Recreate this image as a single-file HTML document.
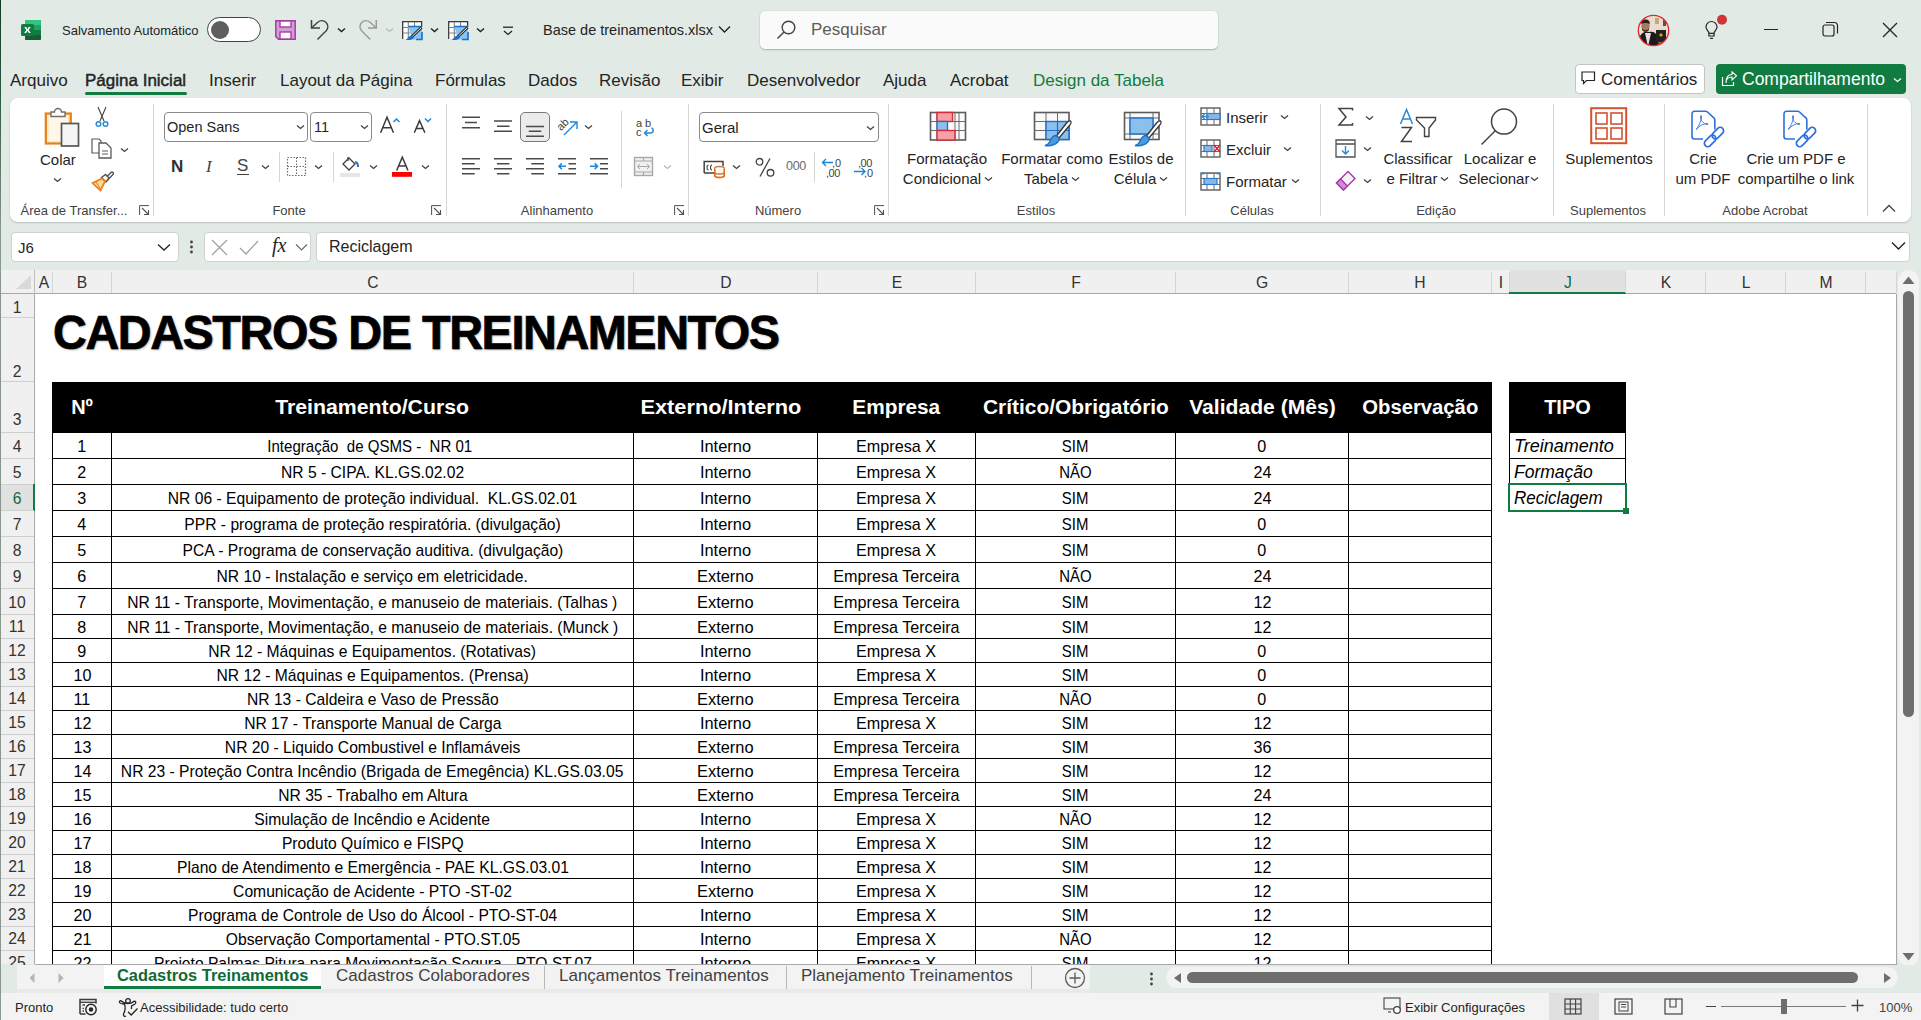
<!DOCTYPE html><html><head><meta charset="utf-8"><style>
*{margin:0;padding:0;box-sizing:border-box}
html,body{width:1921px;height:1020px;overflow:hidden;background:#e1eae5;font-family:"Liberation Sans",sans-serif;color:#242424}
.t{position:absolute;white-space:pre}
.r{position:absolute}
</style></head><body>
<div class="r" style="left:0px;top:0px;width:1px;height:1020px;background:linear-gradient(#0f3d22 0px,#2f5a40 100px,#8a9690 230px,#8a9a90 1020px);"></div>
<svg class="r" style="left:21px;top:20px;" width="21" height="20" viewBox="0 0 21 20"><rect x="4" y="0" width="16" height="20" rx="1.5" fill="#21a366"/>
<rect x="4" y="0" width="16" height="5" fill="#33c481"/><rect x="4" y="10" width="16" height="5" fill="#107c41"/><rect x="4" y="15" width="16" height="5" rx="1" fill="#185c37"/>
<rect x="0" y="4" width="13" height="12" rx="1.5" fill="#107c41"/>
<path d="M3.3 7 L5.3 7 L6.5 9.2 L7.7 7 L9.7 7 L7.6 10 L9.8 13 L7.8 13 L6.5 10.8 L5.2 13 L3.2 13 L5.4 10 Z" fill="#fff"/></svg>
<div class="t" style="left:62px;top:24px;font-size:13px;line-height:13px;color:#242424;font-weight:400;font-style:normal;">Salvamento Automático</div>
<div class="r" style="left:207px;top:17px;width:54px;height:25px;border:1.3px solid #424242;border-radius:13px;background:#fff"></div>
<div class="r" style="left:211px;top:21px;width:18px;height:18px;border-radius:9px;background:#5f5f5f"></div>
<svg class="r" style="left:275px;top:20px;" width="21" height="20" viewBox="0 0 21 20"><path d="M0.8 0.8 H20.2 V19.2 H3.5 L0.8 16.5 Z" fill="#d59dd8" stroke="#a53ba5" stroke-width="1.5"/><rect x="5" y="1" width="11" height="6" fill="#fff" stroke="#a53ba5" stroke-width="1.4"/><rect x="5" y="12" width="11" height="7" fill="#fff" stroke="#a53ba5" stroke-width="1.4"/></svg>
<svg class="r" style="left:310px;top:19px;" width="22" height="22" viewBox="0 0 22 22"><path d="M1.5 1 V9 H10" fill="none" stroke="#424242" stroke-width="1.5"/><path d="M2 8.6 L7.76 3.26 A6 6 0 0 1 16.24 11.74 L7.5 20.5" fill="none" stroke="#424242" stroke-width="1.4"/></svg>
<svg class="r" style="left:337px;top:27px;" width="9" height="6" viewBox="0 0 9 6"><path d="M1 1.5 L4.5 4.5 L8 1.5" fill="none" stroke="#242424" stroke-width="1.5"/></svg>
<svg class="r" style="left:357px;top:19px;" width="22" height="22" viewBox="0 0 22 22"><path d="M19.3 1 V9 H11" fill="none" stroke="#9a9a9a" stroke-width="1.5"/><path d="M18.8 8.6 L13.04 3.26 A6 6 0 0 0 4.56 11.74 L13.3 20.5" fill="none" stroke="#9a9a9a" stroke-width="1.4"/></svg>
<svg class="r" style="left:385px;top:27px;" width="9" height="6" viewBox="0 0 9 6"><path d="M1 1.5 L4.5 4.5 L8 1.5" fill="none" stroke="#c0b8bc" stroke-width="1.2"/></svg>
<svg class="r" style="left:402px;top:21px;" width="22" height="20" viewBox="0 0 22 20"><path d="M0.8 18 V0.8 H19.5 V6" fill="none" stroke="#3a3a3a" stroke-width="1.5"/>
<rect x="1.5" y="1.5" width="17.5" height="16.5" fill="#fff"/>
<path d="M1 6.5 H19 M1 12 H8 M6.3 1 V18 M12.5 1 V6" stroke="#808080" stroke-width="1.1"/>
<path d="M6.3 5.5 H20 V18.5 H10 Z" fill="#8cc4f0"/>
<path d="M6.3 5.5 H20 M20 11 V18.5 H14" fill="none" stroke="#1a6fc9" stroke-width="1.6"/>
<path d="M19.5 6.5 L10 15.5" stroke="#2e2e2e" stroke-width="3"/><path d="M19 7 L10.5 15" stroke="#fff" stroke-width="0.9"/>
<path d="M10.5 14.5 C8 14, 6.5 16, 5.5 17.5 C4.5 18.5, 4 18.5, 3.5 18.8 C7 19.5, 11 19, 12 16 Z" fill="#1a6fc9"/></svg>
<svg class="r" style="left:430px;top:27px;" width="9" height="6" viewBox="0 0 9 6"><path d="M1 1.5 L4.5 4.5 L8 1.5" fill="none" stroke="#242424" stroke-width="1.5"/></svg>
<svg class="r" style="left:448px;top:21px;" width="22" height="20" viewBox="0 0 22 20"><path d="M0.8 18 V0.8 H19.5 V6" fill="none" stroke="#3a3a3a" stroke-width="1.5"/>
<rect x="1.5" y="1.5" width="17.5" height="16.5" fill="#fff"/>
<path d="M1 6.5 H19 M1 12 H8 M6.3 1 V18 M12.5 1 V6" stroke="#808080" stroke-width="1.1"/>
<path d="M6.3 5.5 H20 V18.5 H10 Z" fill="#8cc4f0"/>
<path d="M6.3 5.5 H20 M20 11 V18.5 H14" fill="none" stroke="#1a6fc9" stroke-width="1.6"/>
<path d="M19.5 6.5 L10 15.5" stroke="#2e2e2e" stroke-width="3"/><path d="M19 7 L10.5 15" stroke="#fff" stroke-width="0.9"/>
<path d="M10.5 14.5 C8 14, 6.5 16, 5.5 17.5 C4.5 18.5, 4 18.5, 3.5 18.8 C7 19.5, 11 19, 12 16 Z" fill="#1a6fc9"/></svg>
<svg class="r" style="left:476px;top:27px;" width="9" height="6" viewBox="0 0 9 6"><path d="M1 1.5 L4.5 4.5 L8 1.5" fill="none" stroke="#242424" stroke-width="1.5"/></svg>
<svg class="r" style="left:502px;top:26px;" width="12" height="10" viewBox="0 0 12 10"><path d="M1 1.2 H11" stroke="#242424" stroke-width="1.3"/><path d="M2 5 L6 8.5 L10 5" fill="none" stroke="#242424" stroke-width="1.3"/></svg>
<div class="t" style="left:543px;top:23px;font-size:14.5px;line-height:14.5px;color:#242424;font-weight:400;font-style:normal;">Base de treinamentos.xlsx</div>
<svg class="r" style="left:718px;top:25px;" width="13" height="9" viewBox="0 0 13 9"><path d="M1 1.5 L6.5 7 L12 1.5" fill="none" stroke="#242424" stroke-width="1.4"/></svg>
<div class="r" style="left:760px;top:11px;width:458px;height:38px;background:#fafafa;border-radius:5px;box-shadow:0 1px 1.5px rgba(0,0,0,.22),0 0 0 0.5px rgba(0,0,0,.06)"></div>
<svg class="r" style="left:775px;top:19px;" width="22" height="22" viewBox="0 0 22 22"><circle cx="13.5" cy="8.5" r="6.3" fill="none" stroke="#424242" stroke-width="1.4"/><path d="M9 13 L2.5 19.5" stroke="#424242" stroke-width="1.5"/></svg>
<div class="t" style="left:811px;top:21px;font-size:17px;line-height:17px;color:#5c5c5c;font-weight:400;font-style:normal;">Pesquisar</div>
<svg class="r" style="left:1637px;top:14px;" width="33" height="33" viewBox="0 0 33 33"><defs><clipPath id="av"><circle cx="16.5" cy="16.5" r="15"/></clipPath></defs>
<g clip-path="url(#av)">
<rect x="0" y="0" width="33" height="33" fill="#e8ddd0"/>
<rect x="18" y="4" width="4" height="6" fill="#c9a870"/><rect x="26" y="6" width="3" height="6" fill="#5a5040"/>
<rect x="0" y="26" width="33" height="8" fill="#8a6a4a"/>
<path d="M2 33 L3 22 C5 18, 9 17, 12 18 C15 17, 18 18, 20 21 L22 33 Z" fill="#1e1a1a"/>
<path d="M8 19 L11 33 L14 19 Z" fill="#e8dce8"/>
<ellipse cx="8.5" cy="12" rx="4.2" ry="5" fill="#a8785a"/>
<path d="M4.3 10 C4 6, 7 5, 9 5.5 C12 5.5, 13 8, 12.7 10 C11 8.5, 6 8.5, 4.3 10 Z" fill="#2a201c"/>
<path d="M5 14 C6 17, 11 17, 12 14 L12 16 C10 18.5, 7 18.5, 5 16 Z" fill="#3a2a22"/>
<rect x="19" y="16" width="10" height="12" fill="#222"/><path d="M22 21 L24 19 L26 21 L24 23 Z" fill="#d4a020"/>
</g>
<circle cx="16.5" cy="16.5" r="15.2" fill="none" stroke="#e0262e" stroke-width="1.3"/></svg>
<svg class="r" style="left:1702px;top:13px;" width="28" height="28" viewBox="0 0 28 28"><path d="M7 20 C6.5 18, 4 16.5, 4 14 A5.5 5.5 0 0 1 15 14 C15 16.5, 12.5 18, 12 20" fill="none" stroke="#242424" stroke-width="1.2"/><path d="M6.9 20.3 H12.1 V23 H6.9 Z" fill="none" stroke="#242424" stroke-width="1.2"/><path d="M8 25.3 H11" stroke="#242424" stroke-width="1.2"/><circle cx="20" cy="6.7" r="5" fill="#d13438"/></svg>
<div class="r" style="left:1764px;top:29px;width:14px;height:1.3px;background:#242424;"></div>
<svg class="r" style="left:1822px;top:21px;" width="17" height="17" viewBox="0 0 17 17"><rect x="1" y="4" width="11" height="11" rx="2" fill="none" stroke="#242424" stroke-width="1.2"/><path d="M4 1.5 H12.5 A3 3 0 0 1 15.5 4.5 V12.5" fill="none" stroke="#242424" stroke-width="1.2"/></svg>
<svg class="r" style="left:1882px;top:22px;" width="16" height="16" viewBox="0 0 16 16"><path d="M1 1 L15 15 M15 1 L1 15" stroke="#242424" stroke-width="1.3"/></svg>
<div class="t" style="left:10px;top:72px;font-size:17px;line-height:17px;color:#242424;font-weight:400;font-style:normal;">Arquivo</div>
<div class="t" style="left:85px;top:72px;font-size:17px;line-height:17px;color:#242424;font-weight:400;font-style:normal;-webkit-text-stroke:0.45px #242424">Página Inicial</div>
<div class="t" style="left:209px;top:72px;font-size:17px;line-height:17px;color:#242424;font-weight:400;font-style:normal;">Inserir</div>
<div class="t" style="left:280px;top:72px;font-size:17px;line-height:17px;color:#242424;font-weight:400;font-style:normal;">Layout da Página</div>
<div class="t" style="left:435px;top:72px;font-size:17px;line-height:17px;color:#242424;font-weight:400;font-style:normal;">Fórmulas</div>
<div class="t" style="left:528px;top:72px;font-size:17px;line-height:17px;color:#242424;font-weight:400;font-style:normal;">Dados</div>
<div class="t" style="left:599px;top:72px;font-size:17px;line-height:17px;color:#242424;font-weight:400;font-style:normal;">Revisão</div>
<div class="t" style="left:681px;top:72px;font-size:17px;line-height:17px;color:#242424;font-weight:400;font-style:normal;">Exibir</div>
<div class="t" style="left:747px;top:72px;font-size:17px;line-height:17px;color:#242424;font-weight:400;font-style:normal;">Desenvolvedor</div>
<div class="t" style="left:883px;top:72px;font-size:17px;line-height:17px;color:#242424;font-weight:400;font-style:normal;">Ajuda</div>
<div class="t" style="left:950px;top:72px;font-size:17px;line-height:17px;color:#242424;font-weight:400;font-style:normal;">Acrobat</div>
<div class="t" style="left:1033px;top:72px;font-size:17px;line-height:17px;color:#107c41;font-weight:400;font-style:normal;">Design da Tabela</div>
<div class="r" style="left:85px;top:92px;width:102px;height:3px;border-radius:2px;background:#107c41"></div>
<div class="r" style="left:1575px;top:64px;width:130px;height:30px;background:#fff;border:1px solid #c4c4c4;border-radius:4px"></div>
<svg class="r" style="left:1581px;top:71px;" width="16" height="15" viewBox="0 0 16 15"><path d="M1 1 H13.5 V9.5 H5.5 L2.5 12.5 V9.5 H1 Z" fill="none" stroke="#242424" stroke-width="1.2"/></svg>
<div class="t" style="left:1601px;top:71px;font-size:17px;line-height:17px;color:#242424;font-weight:400;font-style:normal;">Comentários</div>
<div class="r" style="left:1716px;top:64px;width:190px;height:30px;background:#107c41;border-radius:4px"></div>
<svg class="r" style="left:1721px;top:71px;" width="17" height="16" viewBox="0 0 17 16"><path d="M1.5 6 V14.5 H12.5 V11" fill="none" stroke="#fff" stroke-width="1.2"/><path d="M5 12 C5 8, 7.5 6, 11 6 V9 L15.5 4.8 L11 0.8 V3.5 C7 3.5, 5 7, 5 12 Z" fill="none" stroke="#fff" stroke-width="1.1"/></svg>
<div class="t" style="left:1742px;top:71px;font-size:17.5px;line-height:17.5px;color:#ffffff;font-weight:400;font-style:normal;">Compartilhamento</div>
<svg class="r" style="left:1893px;top:77px;" width="9" height="6" viewBox="0 0 9 6"><path d="M1 1.5 L4.5 4.5 L8 1.5" fill="none" stroke="#fff" stroke-width="1.3"/></svg>
<div class="r" style="left:10px;top:98px;width:1901px;height:124px;background:#fff;border-radius:8px;box-shadow:0 1px 2px rgba(0,0,0,.18)"></div>
<div class="r" style="left:153px;top:104px;width:1px;height:112px;background:#d6d6d6;"></div>
<div class="r" style="left:446px;top:104px;width:1px;height:112px;background:#d6d6d6;"></div>
<div class="r" style="left:688px;top:104px;width:1px;height:112px;background:#d6d6d6;"></div>
<div class="r" style="left:888px;top:104px;width:1px;height:112px;background:#d6d6d6;"></div>
<div class="r" style="left:1185px;top:104px;width:1px;height:112px;background:#d6d6d6;"></div>
<div class="r" style="left:1320px;top:104px;width:1px;height:112px;background:#d6d6d6;"></div>
<div class="r" style="left:1553px;top:104px;width:1px;height:112px;background:#d6d6d6;"></div>
<div class="r" style="left:1664px;top:104px;width:1px;height:112px;background:#d6d6d6;"></div>
<div class="r" style="left:1867px;top:104px;width:1px;height:112px;background:#d6d6d6;"></div>
<div class="t" style="left:-326px;width:800px;text-align:center;top:203.5px;font-size:13px;line-height:13px;color:#424242;font-weight:400;font-style:normal;">Área de Transfer...</div>
<div class="t" style="left:-111px;width:800px;text-align:center;top:203.5px;font-size:13px;line-height:13px;color:#424242;font-weight:400;font-style:normal;">Fonte</div>
<div class="t" style="left:157px;width:800px;text-align:center;top:203.5px;font-size:13px;line-height:13px;color:#424242;font-weight:400;font-style:normal;">Alinhamento</div>
<div class="t" style="left:378px;width:800px;text-align:center;top:203.5px;font-size:13px;line-height:13px;color:#424242;font-weight:400;font-style:normal;">Número</div>
<div class="t" style="left:636px;width:800px;text-align:center;top:203.5px;font-size:13px;line-height:13px;color:#424242;font-weight:400;font-style:normal;">Estilos</div>
<div class="t" style="left:852px;width:800px;text-align:center;top:203.5px;font-size:13px;line-height:13px;color:#424242;font-weight:400;font-style:normal;">Células</div>
<div class="t" style="left:1036px;width:800px;text-align:center;top:203.5px;font-size:13px;line-height:13px;color:#424242;font-weight:400;font-style:normal;">Edição</div>
<div class="t" style="left:1208px;width:800px;text-align:center;top:203.5px;font-size:13px;line-height:13px;color:#424242;font-weight:400;font-style:normal;">Suplementos</div>
<div class="t" style="left:1365px;width:800px;text-align:center;top:203.5px;font-size:13px;line-height:13px;color:#424242;font-weight:400;font-style:normal;">Adobe Acrobat</div>
<svg class="r" style="left:139px;top:205px;" width="11" height="11" viewBox="0 0 11 11"><path d="M0.6 10 V0.6 H10 " fill="none" stroke="#505050" stroke-width="1"/><path d="M3 3 L9.5 9.5 M5 9.5 H9.5 V5" fill="none" stroke="#505050" stroke-width="1.1"/></svg>
<svg class="r" style="left:431px;top:205px;" width="11" height="11" viewBox="0 0 11 11"><path d="M0.6 10 V0.6 H10 " fill="none" stroke="#505050" stroke-width="1"/><path d="M3 3 L9.5 9.5 M5 9.5 H9.5 V5" fill="none" stroke="#505050" stroke-width="1.1"/></svg>
<svg class="r" style="left:674px;top:205px;" width="11" height="11" viewBox="0 0 11 11"><path d="M0.6 10 V0.6 H10 " fill="none" stroke="#505050" stroke-width="1"/><path d="M3 3 L9.5 9.5 M5 9.5 H9.5 V5" fill="none" stroke="#505050" stroke-width="1.1"/></svg>
<svg class="r" style="left:874px;top:205px;" width="11" height="11" viewBox="0 0 11 11"><path d="M0.6 10 V0.6 H10 " fill="none" stroke="#505050" stroke-width="1"/><path d="M3 3 L9.5 9.5 M5 9.5 H9.5 V5" fill="none" stroke="#505050" stroke-width="1.1"/></svg>
<svg class="r" style="left:1882px;top:204px;" width="14" height="9" viewBox="0 0 14 9"><path d="M1 7.5 L7 1.5 L13 7.5" fill="none" stroke="#424242" stroke-width="1.3"/></svg>
<svg class="r" style="left:44px;top:106px;" width="37" height="42" viewBox="0 0 37 42"><rect x="1.8" y="7.5" width="25" height="30" fill="#fde7b8" stroke="#e8801a" stroke-width="2.2"/>
<rect x="4.5" y="10" width="19.5" height="25" fill="#fff8e8"/>
<path d="M7 10.5 V6 H10.5 A3.5 3.5 0 0 1 17.5 6 H21 V10.5 Z" fill="#fff" stroke="#6e6e6e" stroke-width="1.4"/>
<rect x="17.5" y="17.5" width="17" height="22.5" fill="#f5f5f5" stroke="#555" stroke-width="1.7"/></svg>
<div class="t" style="left:40px;top:152px;font-size:15px;line-height:15px;color:#242424;font-weight:400;font-style:normal;">Colar</div>
<svg class="r" style="left:53px;top:177px;" width="9" height="6" viewBox="0 0 9 6"><path d="M1 1.5 L4.5 4.5 L8 1.5" fill="none" stroke="#424242" stroke-width="1.3"/></svg>
<svg class="r" style="left:94px;top:106px;" width="16" height="22" viewBox="0 0 16 22"><path d="M4 1 L10 15 M12 1 L6 15" stroke="#424242" stroke-width="1.1"/><circle cx="4.5" cy="18" r="2.3" fill="none" stroke="#2a8ad4" stroke-width="1.5"/><circle cx="11.5" cy="18" r="2.3" fill="none" stroke="#2a8ad4" stroke-width="1.5"/></svg>
<svg class="r" style="left:91px;top:138px;" width="22" height="22" viewBox="0 0 22 22"><path d="M1 1 H8 L10 3 V15 H1 Z" fill="#fff" stroke="#5a5a5a" stroke-width="1.2"/><path d="M8 5 H15 L20 10 V20 H8 Z" fill="#fff" stroke="#5a5a5a" stroke-width="1.3"/><path d="M11 13 H17 M11 16 H17" stroke="#5a5a5a" stroke-width="1"/></svg>
<svg class="r" style="left:120px;top:147px;" width="9" height="6" viewBox="0 0 9 6"><path d="M1 1.5 L4.5 4.5 L8 1.5" fill="none" stroke="#424242" stroke-width="1.3"/></svg>
<svg class="r" style="left:91px;top:169px;" width="23" height="23" viewBox="0 0 23 23"><path d="M14 9.5 L20 3.5 A1.4 1.4 0 0 1 22 5.5 L16 11.5" fill="#fff" stroke="#505050" stroke-width="1.4"/><path d="M10.5 8.5 L14.5 5.5 L18 9 L15 13 Z" fill="#fff" stroke="#505050" stroke-width="1.4"/><path d="M1.5 14 L11 9.5 L14 12.5 L9.5 21.5 Z" fill="#fbd59a" stroke="#e8801a" stroke-width="1.7"/><path d="M5 13 L9.5 20" stroke="#e8801a" stroke-width="1"/></svg>
<div class="r" style="left:164px;top:112px;width:144px;height:30px;border:1px solid #8a8a8a;border-radius:4px;background:#fff"></div>
<div class="t" style="left:167px;top:120px;font-size:14.5px;line-height:14.5px;color:#242424;font-weight:400;font-style:normal;">Open Sans</div>
<svg class="r" style="left:296px;top:124px;" width="9" height="6" viewBox="0 0 9 6"><path d="M1 1.5 L4.5 4.5 L8 1.5" fill="none" stroke="#424242" stroke-width="1.3"/></svg>
<div class="r" style="left:310px;top:112px;width:62px;height:30px;border:1px solid #8a8a8a;border-radius:4px;background:#fff"></div>
<div class="t" style="left:314px;top:120px;font-size:14.5px;line-height:14.5px;color:#242424;font-weight:400;font-style:normal;">11</div>
<svg class="r" style="left:360px;top:124px;" width="9" height="6" viewBox="0 0 9 6"><path d="M1 1.5 L4.5 4.5 L8 1.5" fill="none" stroke="#424242" stroke-width="1.3"/></svg>
<svg class="r" style="left:378px;top:114px;" width="56" height="22" viewBox="0 0 56 22"><path d="M2.6 18.8 L9 3.2 L15.5 18.8 M5 13.7 H13" fill="none" stroke="#3a3a3a" stroke-width="1.5"/><path d="M15.5 8 L18.5 5 L21.5 8" fill="none" stroke="#1e88d8" stroke-width="1.5"/><path d="M36.3 18.8 L41.5 6.7 L46.9 18.8 M38.3 14.5 H44.9" fill="none" stroke="#3a3a3a" stroke-width="1.5"/><path d="M47 4.5 L50 7.5 L53 4.5" fill="none" stroke="#1e88d8" stroke-width="1.5"/></svg>
<div class="t" style="left:171px;top:158px;font-size:17px;line-height:17px;color:#303030;font-weight:700;font-style:normal;">N</div>
<div class="t" style="left:206px;top:158px;font-size:17px;line-height:17px;color:#424242;font-weight:400;font-style:italic;font-family:'Liberation Serif'">I</div>
<div class="t" style="left:237px;top:157px;font-size:17px;line-height:17px;color:#424242;font-weight:400;font-style:normal;">S</div>
<div class="r" style="left:237px;top:174px;width:12px;height:1.3px;background:#424242;"></div>
<svg class="r" style="left:261px;top:164px;" width="9" height="6" viewBox="0 0 9 6"><path d="M1 1.5 L4.5 4.5 L8 1.5" fill="none" stroke="#424242" stroke-width="1.3"/></svg>
<div class="r" style="left:279px;top:152px;width:1px;height:30px;background:#d6d6d6;"></div>
<svg class="r" style="left:286px;top:156px;" width="22" height="22" viewBox="0 0 22 22"><rect x="1.5" y="1.5" width="18" height="18" fill="none" stroke="#6a6a6a" stroke-width="1.2" stroke-dasharray="1.5 1.5"/><path d="M10.5 1.5 V19.5 M1.5 10.5 H19.5" stroke="#6a6a6a" stroke-width="1" stroke-dasharray="1.5 1.5"/></svg>
<svg class="r" style="left:314px;top:164px;" width="9" height="6" viewBox="0 0 9 6"><path d="M1 1.5 L4.5 4.5 L8 1.5" fill="none" stroke="#424242" stroke-width="1.3"/></svg>
<div class="r" style="left:333px;top:152px;width:1px;height:30px;background:#d6d6d6;"></div>
<svg class="r" style="left:340px;top:155px;" width="22" height="24" viewBox="0 0 22 24"><path d="M3 9 L9 3 L15 9 L9 15 Z" fill="none" stroke="#424242" stroke-width="1.3"/><path d="M8 2 L8 6" stroke="#424242" stroke-width="1.3"/><path d="M15 7 C17 7, 18 9, 18 12" stroke="#2a6fc9" stroke-width="2" fill="none"/><rect x="0" y="18" width="20" height="4" fill="#e6e6e6"/></svg>
<svg class="r" style="left:369px;top:164px;" width="9" height="6" viewBox="0 0 9 6"><path d="M1 1.5 L4.5 4.5 L8 1.5" fill="none" stroke="#424242" stroke-width="1.3"/></svg>
<svg class="r" style="left:390px;top:154px;" width="24" height="24" viewBox="0 0 24 24"><path d="M6.7 16.5 L12.3 3.2 L18 16.5 M8.8 12 H15.8" fill="none" stroke="#3a3a3a" stroke-width="1.5"/><rect x="2" y="18" width="20" height="4.8" fill="#ff0000"/></svg>
<svg class="r" style="left:421px;top:164px;" width="9" height="6" viewBox="0 0 9 6"><path d="M1 1.5 L4.5 4.5 L8 1.5" fill="none" stroke="#424242" stroke-width="1.3"/></svg>
<svg class="r" style="left:455px;top:105px;" width="240" height="80" viewBox="0 0 240 80"><path d="M7 12.25 H25" stroke="#4a4a4a" stroke-width="1.5"/><path d="M10 17.5 H22" stroke="#4a4a4a" stroke-width="1.5"/><path d="M7 22.75 H25" stroke="#4a4a4a" stroke-width="1.5"/><path d="M39 16 H57" stroke="#4a4a4a" stroke-width="1.5"/><path d="M42 21.25 H54.5" stroke="#4a4a4a" stroke-width="1.5"/><path d="M39 26.25 H57" stroke="#4a4a4a" stroke-width="1.5"/></svg>
<div class="r" style="left:520px;top:112px;width:30px;height:30px;border:1px solid #7a7a7a;border-radius:5px;background:#ebebeb"></div>
<svg class="r" style="left:455px;top:105px;" width="240" height="80" viewBox="0 0 240 80"><path d="M71 21.5 H89" stroke="#4a4a4a" stroke-width="1.5"/><path d="M73.75 26.25 H86.25" stroke="#4a4a4a" stroke-width="1.5"/><path d="M71 31.25 H89" stroke="#4a4a4a" stroke-width="1.5"/></svg>
<svg class="r" style="left:455px;top:105px;" width="240" height="80" viewBox="0 0 240 80"><path d="M7 53.75 H25" stroke="#4a4a4a" stroke-width="1.5"/><path d="M39 53.75 H57" stroke="#4a4a4a" stroke-width="1.5"/><path d="M71 53.75 H89" stroke="#4a4a4a" stroke-width="1.5"/><path d="M7 58.75 H19.75" stroke="#4a4a4a" stroke-width="1.5"/><path d="M41.9 58.75 H54.4" stroke="#4a4a4a" stroke-width="1.5"/><path d="M76.25 58.75 H89" stroke="#4a4a4a" stroke-width="1.5"/><path d="M7 63.75 H25" stroke="#4a4a4a" stroke-width="1.5"/><path d="M39 63.75 H57" stroke="#4a4a4a" stroke-width="1.5"/><path d="M71 63.75 H89" stroke="#4a4a4a" stroke-width="1.5"/><path d="M7 68.75 H19.75" stroke="#4a4a4a" stroke-width="1.5"/><path d="M41.9 68.75 H54.4" stroke="#4a4a4a" stroke-width="1.5"/><path d="M76.25 68.75 H89" stroke="#4a4a4a" stroke-width="1.5"/><path d="M103 53.75 H121" stroke="#4a4a4a" stroke-width="1.5"/><path d="M113.5 58.75 H121" stroke="#4a4a4a" stroke-width="1.5"/><path d="M113.5 63.75 H121" stroke="#4a4a4a" stroke-width="1.5"/><path d="M103 68.75 H121" stroke="#4a4a4a" stroke-width="1.5"/><path d="M111 61.25 H104 M106.8 58.4 L104 61.25 L106.8 64.1" fill="none" stroke="#1e88d8" stroke-width="1.5"/><path d="M135 53.75 H153" stroke="#4a4a4a" stroke-width="1.5"/><path d="M145 58.75 H153" stroke="#4a4a4a" stroke-width="1.5"/><path d="M145 63.75 H153" stroke="#4a4a4a" stroke-width="1.5"/><path d="M135 68.75 H153" stroke="#4a4a4a" stroke-width="1.5"/><path d="M135 61.25 H142.5 M139.7 58.4 L142.5 61.25 L139.7 64.1" fill="none" stroke="#1e88d8" stroke-width="1.5"/></svg>
<svg class="r" style="left:555px;top:114px;" width="26" height="24" viewBox="0 0 26 24"><text x="2" y="14" transform="rotate(-45 8 11)" font-size="11" font-family="Liberation Sans" fill="#424242">ab</text><path d="M9 21 L21.5 8.5 M15 8 H22 V15" fill="none" stroke="#1e88d8" stroke-width="1.4"/></svg>
<svg class="r" style="left:584px;top:124px;" width="9" height="6" viewBox="0 0 9 6"><path d="M1 1.5 L4.5 4.5 L8 1.5" fill="none" stroke="#424242" stroke-width="1.3"/></svg>
<div class="r" style="left:621px;top:111px;width:1px;height:77px;background:#d6d6d6;"></div>
<svg class="r" style="left:635px;top:116px;" width="22" height="24" viewBox="0 0 22 24"><text x="1" y="11" font-size="11" font-family="Liberation Sans" fill="#424242" textLength="15">ab</text><text x="1" y="20" font-size="11" font-family="Liberation Sans" fill="#424242">c</text><path d="M16.5 12 C19 13, 19 17, 15 17 H10 M12.5 14 L9.5 17 L12.5 20" fill="none" stroke="#1e88d8" stroke-width="1.4"/></svg>
<svg class="r" style="left:633px;top:156px;" width="21" height="21" viewBox="0 0 21 21"><rect x="1.5" y="1.5" width="18" height="18" fill="#f0f0f0" stroke="#a8a8a8" stroke-width="1.4"/><path d="M1.5 5 H19.5 M1.5 16 H19.5 M10.5 1.5 V5 M10.5 16 V19.5" stroke="#a8a8a8" stroke-width="1.2"/><path d="M4.5 10.5 H16.5 M7 8 L4.5 10.5 L7 13 M14 8 L16.5 10.5 L14 13" fill="none" stroke="#a8a8a8" stroke-width="1"/></svg>
<svg class="r" style="left:663px;top:164px;" width="9" height="6" viewBox="0 0 9 6"><path d="M1 1.5 L4.5 4.5 L8 1.5" fill="none" stroke="#b8b8b8" stroke-width="1.3"/></svg>
<div class="r" style="left:699px;top:112px;width:180px;height:30px;border:1px solid #8a8a8a;border-radius:4px;background:#fff"></div>
<div class="t" style="left:702px;top:120px;font-size:15px;line-height:15px;color:#242424;font-weight:400;font-style:normal;">Geral</div>
<svg class="r" style="left:866px;top:125px;" width="9" height="6" viewBox="0 0 9 6"><path d="M1 1.5 L4.5 4.5 L8 1.5" fill="none" stroke="#424242" stroke-width="1.3"/></svg>
<svg class="r" style="left:703px;top:157px;" width="24" height="22" viewBox="0 0 24 22"><path d="M1.2 16 V4.5 H20 V9" fill="none" stroke="#424242" stroke-width="1.5"/><path d="M1.2 16 H11" stroke="#424242" stroke-width="1.5"/><path d="M5.5 13 C3.5 13, 3.5 8, 5.5 8 M9 13 C7 13, 7 8, 9 8" fill="none" stroke="#424242" stroke-width="1.1"/><ellipse cx="16.5" cy="11.5" rx="4.8" ry="2" fill="#fff" stroke="#e07020" stroke-width="1.4"/><path d="M11.7 11.5 V18.5 A4.8 2 0 0 0 21.3 18.5 V11.5 M11.7 15 A4.8 2 0 0 0 21.3 15" fill="#fff" stroke="#e07020" stroke-width="1.4"/><path d="M11.7 12 V18.5 A4.8 2 0 0 0 21.3 18.5 V12" fill="none" stroke="#e07020" stroke-width="1.4"/></svg>
<svg class="r" style="left:732px;top:164px;" width="9" height="6" viewBox="0 0 9 6"><path d="M1 1.5 L4.5 4.5 L8 1.5" fill="none" stroke="#424242" stroke-width="1.3"/></svg>
<svg class="r" style="left:755px;top:157px;" width="21" height="21" viewBox="0 0 21 21"><circle cx="4.5" cy="4.8" r="3.3" fill="none" stroke="#424242" stroke-width="1.3"/><circle cx="15.5" cy="15.8" r="3.3" fill="none" stroke="#424242" stroke-width="1.3"/><path d="M15 1.5 L5 19.5" stroke="#424242" stroke-width="1.3"/></svg>
<div class="t" style="left:786px;top:160px;font-size:12.5px;line-height:12.5px;color:#6a6a6a;font-weight:400;font-style:normal;letter-spacing:-0.3px">000</div>
<div class="r" style="left:814px;top:152px;width:1px;height:30px;background:#d6d6d6;"></div>
<svg class="r" style="left:820px;top:156px;" width="24" height="22" viewBox="0 0 24 22"><path d="M13 6.5 H2.5 M6 3 L2.5 6.5 L6 10" fill="none" stroke="#1e88d8" stroke-width="1.4"/><text x="12" y="11" font-size="11" font-family="Liberation Sans" fill="#424242">,0</text><text x="6" y="20.5" font-size="11" font-family="Liberation Sans" fill="#424242" letter-spacing="-0.5">,00</text></svg>
<svg class="r" style="left:852px;top:156px;" width="24" height="22" viewBox="0 0 24 22"><text x="6" y="11" font-size="11" font-family="Liberation Sans" fill="#424242" letter-spacing="-0.5">,00</text><path d="M2 15.5 H13 M9.5 12 L13 15.5 L9.5 19" fill="none" stroke="#1e88d8" stroke-width="1.4"/><text x="12" y="20.5" font-size="11" font-family="Liberation Sans" fill="#424242">,0</text></svg>
<svg class="r" style="left:929px;top:111px;" width="40" height="32" viewBox="0 0 40 32"><rect x="1.5" y="1.5" width="35" height="27.5" fill="#fafafa" stroke="#5a5a5a" stroke-width="1.6"/>
<path d="M1.5 10.5 H36.5 M1.5 19.5 H36.5 M8 1.5 V29 M26 1.5 V29 M30 1.5 V29" stroke="#6a6a6a" stroke-width="1"/>
<rect x="8" y="1.5" width="15.5" height="9" fill="#f5a0a8" stroke="#d92b35" stroke-width="1.4"/><rect x="8" y="10.5" width="10.5" height="9" fill="#8cc0ec" stroke="#1f6fc5" stroke-width="1.3"/><rect x="8" y="19.5" width="18" height="9.5" fill="#f5a0a8" stroke="#d92b35" stroke-width="1.4"/></svg>
<div class="t" style="left:547px;width:800px;text-align:center;top:151px;font-size:15px;line-height:15px;color:#242424;font-weight:400;font-style:normal;">Formatação</div>
<div class="t" style="left:542px;width:800px;text-align:center;top:171px;font-size:15px;line-height:15px;color:#242424;font-weight:400;font-style:normal;">Condicional</div>
<svg class="r" style="left:984px;top:176px;" width="9" height="6" viewBox="0 0 9 6"><path d="M1 1.5 L4.5 4.5 L8 1.5" fill="none" stroke="#424242" stroke-width="1.3"/></svg>
<svg class="r" style="left:1033px;top:111px;" width="42" height="36" viewBox="0 0 42 36"><rect x="1.5" y="1.5" width="34.5" height="27" fill="#fafafa" stroke="#5a5a5a" stroke-width="1.6"/>
<path d="M1.5 10.5 H36 M1.5 19.5 H36 M13 1.5 V28.5 M24.5 1.5 V28.5" stroke="#6a6a6a" stroke-width="1"/>
<rect x="13" y="10.5" width="23" height="18" fill="#8cc0ec" stroke="#1f6fc5" stroke-width="1.4"/><path d="M13 19.5 H36 M24.5 10.5 V28.5" stroke="#1f6fc5" stroke-width="1.2"/>
<path d="M37.5 10 C38.5 11, 38 13, 36 15 L26 27 L23.5 25 L33.5 12 C35 10.5, 36.5 9.5, 37.5 10 Z" fill="#fff" stroke="#3a3a3a" stroke-width="1.4"/>
<path d="M23 24.5 C19 24.5, 18 28, 16.5 31 C15.5 33, 14 34, 12 34.5 C18 35.5, 25 33.5, 26.5 27.5 Z" fill="#4a9ae0" stroke="#1f6fc5" stroke-width="1.3"/></svg>
<div class="t" style="left:652px;width:800px;text-align:center;top:151px;font-size:15px;line-height:15px;color:#242424;font-weight:400;font-style:normal;">Formatar como</div>
<div class="t" style="left:646px;width:800px;text-align:center;top:171px;font-size:15px;line-height:15px;color:#242424;font-weight:400;font-style:normal;">Tabela</div>
<svg class="r" style="left:1071px;top:176px;" width="9" height="6" viewBox="0 0 9 6"><path d="M1 1.5 L4.5 4.5 L8 1.5" fill="none" stroke="#424242" stroke-width="1.3"/></svg>
<svg class="r" style="left:1123px;top:111px;" width="42" height="36" viewBox="0 0 42 36"><rect x="1.5" y="1.5" width="34.5" height="27" fill="#fafafa" stroke="#5a5a5a" stroke-width="1.6"/>
<path d="M1.5 7 H36 M1.5 23 H36 M7 1.5 V28.5 M30 1.5 V28.5" stroke="#6a6a6a" stroke-width="1"/>
<rect x="7" y="7" width="23" height="16" fill="#8cc0ec" stroke="#1f6fc5" stroke-width="1.4"/>
<path d="M37.5 10 C38.5 11, 38 13, 36 15 L26 27 L23.5 25 L33.5 12 C35 10.5, 36.5 9.5, 37.5 10 Z" fill="#fff" stroke="#3a3a3a" stroke-width="1.4"/>
<path d="M23 24.5 C19 24.5, 18 28, 16.5 31 C15.5 33, 14 34, 12 34.5 C18 35.5, 25 33.5, 26.5 27.5 Z" fill="#4a9ae0" stroke="#1f6fc5" stroke-width="1.3"/></svg>
<div class="t" style="left:741px;width:800px;text-align:center;top:151px;font-size:15px;line-height:15px;color:#242424;font-weight:400;font-style:normal;">Estilos de</div>
<div class="t" style="left:735px;width:800px;text-align:center;top:171px;font-size:15px;line-height:15px;color:#242424;font-weight:400;font-style:normal;">Célula</div>
<svg class="r" style="left:1159px;top:176px;" width="9" height="6" viewBox="0 0 9 6"><path d="M1 1.5 L4.5 4.5 L8 1.5" fill="none" stroke="#424242" stroke-width="1.3"/></svg>
<svg class="r" style="left:1200px;top:107px;" width="21" height="19" viewBox="0 0 21 19"><rect x="1" y="1" width="19" height="17" fill="#fff" stroke="#505050" stroke-width="1.3"/><path d="M1 6.5 H20 M1 12.5 H20 M7 1 V18 M14 1 V18" stroke="#6a6a6a" stroke-width="1"/><rect x="7" y="6.5" width="13" height="6" fill="#8ab8e6" stroke="#2a7ad0" stroke-width="1.2"/><path d="M9 9.5 H2 M4.5 7 L2 9.5 L4.5 12" fill="none" stroke="#2a8ad4" stroke-width="1.4"/></svg>
<div class="t" style="left:1226px;top:110px;font-size:15px;line-height:15px;color:#242424;font-weight:400;font-style:normal;">Inserir</div>
<svg class="r" style="left:1280px;top:114px;" width="9" height="6" viewBox="0 0 9 6"><path d="M1 1.5 L4.5 4.5 L8 1.5" fill="none" stroke="#424242" stroke-width="1.3"/></svg>
<svg class="r" style="left:1200px;top:139px;" width="21" height="19" viewBox="0 0 21 19"><rect x="1" y="1" width="19" height="17" fill="#fff" stroke="#505050" stroke-width="1.3"/><path d="M1 6.5 H20 M1 12.5 H20 M7 1 V18 M14 1 V18" stroke="#6a6a6a" stroke-width="1"/><rect x="4" y="6.5" width="8" height="6" fill="#8ab8e6" stroke="#2a7ad0" stroke-width="1.2"/><path d="M14 6 L20 13 M20 6 L14 13" stroke="#e81123" stroke-width="1.3"/></svg>
<div class="t" style="left:1226px;top:142px;font-size:15px;line-height:15px;color:#242424;font-weight:400;font-style:normal;">Excluir</div>
<svg class="r" style="left:1283px;top:146px;" width="9" height="6" viewBox="0 0 9 6"><path d="M1 1.5 L4.5 4.5 L8 1.5" fill="none" stroke="#424242" stroke-width="1.3"/></svg>
<svg class="r" style="left:1200px;top:172px;" width="21" height="19" viewBox="0 0 21 19"><rect x="1" y="1" width="19" height="17" fill="#fff" stroke="#505050" stroke-width="1.3"/><path d="M1 6.5 H20 M1 12.5 H20 M7 1 V18 M14 1 V18" stroke="#6a6a6a" stroke-width="1"/><rect x="4" y="6.5" width="13" height="6" fill="#8ab8e6" stroke="#2a7ad0" stroke-width="1.2"/><path d="M3 0 V3 M18 0 V3 M3 1.5 H18" stroke="#2a8ad4" stroke-width="1"/></svg>
<div class="t" style="left:1226px;top:174px;font-size:15px;line-height:15px;color:#242424;font-weight:400;font-style:normal;">Formatar</div>
<svg class="r" style="left:1291px;top:178px;" width="9" height="6" viewBox="0 0 9 6"><path d="M1 1.5 L4.5 4.5 L8 1.5" fill="none" stroke="#424242" stroke-width="1.3"/></svg>
<svg class="r" style="left:1337px;top:107px;" width="18" height="20" viewBox="0 0 18 20"><path d="M15.5 3.5 V1.5 H2 L9 10 L2 18 H15.5 V16" fill="none" stroke="#424242" stroke-width="1.5"/></svg>
<svg class="r" style="left:1365px;top:115px;" width="9" height="6" viewBox="0 0 9 6"><path d="M1 1.5 L4.5 4.5 L8 1.5" fill="none" stroke="#424242" stroke-width="1.3"/></svg>
<svg class="r" style="left:1335px;top:139px;" width="22" height="20" viewBox="0 0 22 20"><path d="M1 1 H20 V18 H1 Z M1 5 H20" fill="none" stroke="#505050" stroke-width="1.3"/><path d="M10.5 7 V15 M7 11.5 L10.5 15 L14 11.5" fill="none" stroke="#2a8ad4" stroke-width="1.4"/></svg>
<svg class="r" style="left:1363px;top:146px;" width="9" height="6" viewBox="0 0 9 6"><path d="M1 1.5 L4.5 4.5 L8 1.5" fill="none" stroke="#424242" stroke-width="1.3"/></svg>
<svg class="r" style="left:1335px;top:170px;" width="22" height="22" viewBox="0 0 22 22"><path d="M1.5 13 L13 1.5 L20 8.5 L8.5 20 Z" fill="#f3f3f3" stroke="#a53ba5" stroke-width="1.4"/><path d="M1.5 13 L5.5 9 L12.5 16 L8.5 20 Z" fill="#d08ad8" stroke="#a53ba5" stroke-width="1.3"/></svg>
<svg class="r" style="left:1363px;top:178px;" width="9" height="6" viewBox="0 0 9 6"><path d="M1 1.5 L4.5 4.5 L8 1.5" fill="none" stroke="#424242" stroke-width="1.3"/></svg>
<svg class="r" style="left:1399px;top:108px;" width="38" height="38" viewBox="0 0 38 38"><path d="M1.5 16 L7.5 1.5 L13.5 16 M3.5 11 H11.5" fill="none" stroke="#2a8ad4" stroke-width="1.5"/><path d="M2.5 19.5 H12.5 L2.5 33.5 H13" fill="none" stroke="#424242" stroke-width="1.5"/><path d="M17.5 9.5 H36.5 V12 L30 20 V28.5 H25.5 V20 L17.5 12 Z" fill="none" stroke="#424242" stroke-width="1.4"/></svg>
<div class="t" style="left:1018px;width:800px;text-align:center;top:151px;font-size:15px;line-height:15px;color:#242424;font-weight:400;font-style:normal;">Classificar</div>
<div class="t" style="left:1012px;width:800px;text-align:center;top:171px;font-size:15px;line-height:15px;color:#242424;font-weight:400;font-style:normal;">e Filtrar</div>
<svg class="r" style="left:1440px;top:176px;" width="9" height="6" viewBox="0 0 9 6"><path d="M1 1.5 L4.5 4.5 L8 1.5" fill="none" stroke="#424242" stroke-width="1.3"/></svg>
<svg class="r" style="left:1480px;top:107px;" width="40" height="40" viewBox="0 0 40 40"><circle cx="24" cy="14.6" r="12.5" fill="none" stroke="#424242" stroke-width="1.5"/><path d="M15.5 23.5 L1.5 37.5" stroke="#424242" stroke-width="1.5"/></svg>
<div class="t" style="left:1100px;width:800px;text-align:center;top:151px;font-size:15px;line-height:15px;color:#242424;font-weight:400;font-style:normal;">Localizar e</div>
<div class="t" style="left:1094px;width:800px;text-align:center;top:171px;font-size:15px;line-height:15px;color:#242424;font-weight:400;font-style:normal;">Selecionar</div>
<svg class="r" style="left:1530px;top:176px;" width="9" height="6" viewBox="0 0 9 6"><path d="M1 1.5 L4.5 4.5 L8 1.5" fill="none" stroke="#424242" stroke-width="1.3"/></svg>
<svg class="r" style="left:1590px;top:107px;" width="38" height="38" viewBox="0 0 38 38"><rect x="1.2" y="1.2" width="35" height="35" fill="none" stroke="#d35230" stroke-width="2"/><rect x="6" y="6" width="11" height="11" fill="none" stroke="#d35230" stroke-width="1.6"/><rect x="21" y="6" width="11" height="11" fill="none" stroke="#d35230" stroke-width="1.6"/><rect x="6" y="21" width="11" height="11" fill="none" stroke="#d35230" stroke-width="1.6"/><rect x="21" y="21" width="11" height="11" fill="none" stroke="#d35230" stroke-width="1.6"/></svg>
<div class="t" style="left:1209px;width:800px;text-align:center;top:151px;font-size:15px;line-height:15px;color:#242424;font-weight:400;font-style:normal;">Suplementos</div>
<svg class="r" style="left:1691px;top:110px;" width="36" height="40" viewBox="0 0 36 40"><path d="M12 29 H3.5 A2.5 2.5 0 0 1 1 26.5 V3.8 A2.5 2.5 0 0 1 3.5 1.3 H14.5 A3 3 0 0 1 16.5 2 L22.5 7.5 A3 3 0 0 1 23.8 10 V19.5" fill="none" stroke="#2f6fdc" stroke-width="1.6"/>
<path d="M5.5 19 C8 16, 10 11, 10.5 7 C10.8 5, 9.5 5, 9.5 7 C9.5 10, 12.5 14, 16 14.5 C17.5 14.7, 17.5 13.5, 16 13.5 C13 13.5, 8 16, 5.5 19.5 Z" fill="none" stroke="#2f6fdc" stroke-width="0.9"/>
<g transform="rotate(-45 23 27)"><rect x="10.8" y="23.6" width="13.5" height="6.8" rx="3.4" fill="#fff" stroke="#2f6fdc" stroke-width="1.7"/><rect x="21.7" y="23.6" width="13.5" height="6.8" rx="3.4" fill="none" stroke="#2f6fdc" stroke-width="1.7"/></g></svg>
<div class="t" style="left:1303px;width:800px;text-align:center;top:151px;font-size:15px;line-height:15px;color:#242424;font-weight:400;font-style:normal;">Crie</div>
<div class="t" style="left:1303px;width:800px;text-align:center;top:171px;font-size:15px;line-height:15px;color:#242424;font-weight:400;font-style:normal;">um PDF</div>
<svg class="r" style="left:1783px;top:110px;" width="36" height="40" viewBox="0 0 36 40"><path d="M12 29 H3.5 A2.5 2.5 0 0 1 1 26.5 V3.8 A2.5 2.5 0 0 1 3.5 1.3 H14.5 A3 3 0 0 1 16.5 2 L22.5 7.5 A3 3 0 0 1 23.8 10 V19.5" fill="none" stroke="#2f6fdc" stroke-width="1.6"/>
<path d="M5.5 19 C8 16, 10 11, 10.5 7 C10.8 5, 9.5 5, 9.5 7 C9.5 10, 12.5 14, 16 14.5 C17.5 14.7, 17.5 13.5, 16 13.5 C13 13.5, 8 16, 5.5 19.5 Z" fill="none" stroke="#2f6fdc" stroke-width="0.9"/>
<g transform="rotate(-45 23 27)"><rect x="10.8" y="23.6" width="13.5" height="6.8" rx="3.4" fill="#fff" stroke="#2f6fdc" stroke-width="1.7"/><rect x="21.7" y="23.6" width="13.5" height="6.8" rx="3.4" fill="none" stroke="#2f6fdc" stroke-width="1.7"/></g></svg>
<div class="t" style="left:1396px;width:800px;text-align:center;top:151px;font-size:15px;line-height:15px;color:#242424;font-weight:400;font-style:normal;">Crie um PDF e</div>
<div class="t" style="left:1396px;width:800px;text-align:center;top:171px;font-size:15px;line-height:15px;color:#242424;font-weight:400;font-style:normal;">compartilhe o link</div>
<div class="r" style="left:11px;top:232px;width:168px;height:30px;background:#fff;border:1px solid #d0d0d0;border-radius:4px"></div>
<div class="t" style="left:18px;top:240px;font-size:15px;line-height:15px;color:#242424;font-weight:400;font-style:normal;">J6</div>
<svg class="r" style="left:157px;top:243px;" width="14" height="9" viewBox="0 0 14 9"><path d="M1 1.5 L7 7 L13 1.5" fill="none" stroke="#242424" stroke-width="1.3"/></svg>
<svg class="r" style="left:189px;top:240px;" width="5" height="14" viewBox="0 0 5 14"><circle cx="2.5" cy="2" r="1.4" fill="#424242"/><circle cx="2.5" cy="7" r="1.4" fill="#424242"/><circle cx="2.5" cy="12" r="1.4" fill="#424242"/></svg>
<div class="r" style="left:204px;top:232px;width:107px;height:30px;background:#fff;border:1px solid #d0d0d0;border-radius:4px"></div>
<svg class="r" style="left:211px;top:239px;" width="18" height="17" viewBox="0 0 18 17"><path d="M1 1 L16 16 M16 1 L1 16" stroke="#a0a0a0" stroke-width="1.3"/></svg>
<svg class="r" style="left:239px;top:239px;" width="20" height="17" viewBox="0 0 20 17"><path d="M1 9 L7 15 L19 2" fill="none" stroke="#a0a0a0" stroke-width="1.3"/></svg>
<div class="t" style="left:272px;top:235px;font-size:20px;line-height:20px;color:#242424;font-weight:400;font-style:italic;font-family:'Liberation Serif'">fx</div>
<svg class="r" style="left:295px;top:243px;" width="13" height="9" viewBox="0 0 13 9"><path d="M1 1.5 L6.5 7 L12 1.5" fill="none" stroke="#6a6a6a" stroke-width="1.2"/></svg>
<div class="r" style="left:316px;top:232px;width:1594px;height:30px;background:#fff;border:1px solid #d0d0d0;border-radius:4px"></div>
<div class="t" style="left:329px;top:239px;font-size:16px;line-height:16px;color:#242424;font-weight:400;font-style:normal;">Reciclagem</div>
<svg class="r" style="left:1891px;top:241px;" width="15" height="10" viewBox="0 0 15 10"><path d="M1 1.5 L7.5 8 L14 1.5" fill="none" stroke="#242424" stroke-width="1.4"/></svg>
<div class="r" style="left:1px;top:270px;width:1895px;height:23px;background:#f0f0f0;"></div>
<div class="r" style="left:1px;top:293px;width:1895px;height:1px;background:#a8a8a8;"></div>
<svg class="r" style="left:15px;top:274px;" width="17" height="16" viewBox="0 0 17 16"><path d="M16 1 V15 H1 Z" fill="#d9d9d9"/></svg>
<div class="t" style="left:-356px;width:800px;text-align:center;top:274px;font-size:16.5px;line-height:16.5px;color:#333333;font-weight:400;font-style:normal;transform:scaleX(.95)">A</div>
<div class="r" style="left:52px;top:272px;width:1px;height:21px;background:#d4d4d4;"></div>
<div class="t" style="left:-318px;width:800px;text-align:center;top:274px;font-size:16.5px;line-height:16.5px;color:#333333;font-weight:400;font-style:normal;transform:scaleX(.95)">B</div>
<div class="r" style="left:111px;top:272px;width:1px;height:21px;background:#d4d4d4;"></div>
<div class="t" style="left:-27px;width:800px;text-align:center;top:274px;font-size:16.5px;line-height:16.5px;color:#333333;font-weight:400;font-style:normal;transform:scaleX(.95)">C</div>
<div class="r" style="left:633px;top:272px;width:1px;height:21px;background:#d4d4d4;"></div>
<div class="t" style="left:326px;width:800px;text-align:center;top:274px;font-size:16.5px;line-height:16.5px;color:#333333;font-weight:400;font-style:normal;transform:scaleX(.95)">D</div>
<div class="r" style="left:817px;top:272px;width:1px;height:21px;background:#d4d4d4;"></div>
<div class="t" style="left:497px;width:800px;text-align:center;top:274px;font-size:16.5px;line-height:16.5px;color:#333333;font-weight:400;font-style:normal;transform:scaleX(.95)">E</div>
<div class="r" style="left:975px;top:272px;width:1px;height:21px;background:#d4d4d4;"></div>
<div class="t" style="left:676px;width:800px;text-align:center;top:274px;font-size:16.5px;line-height:16.5px;color:#333333;font-weight:400;font-style:normal;transform:scaleX(.95)">F</div>
<div class="r" style="left:1175px;top:272px;width:1px;height:21px;background:#d4d4d4;"></div>
<div class="t" style="left:862px;width:800px;text-align:center;top:274px;font-size:16.5px;line-height:16.5px;color:#333333;font-weight:400;font-style:normal;transform:scaleX(.95)">G</div>
<div class="r" style="left:1348px;top:272px;width:1px;height:21px;background:#d4d4d4;"></div>
<div class="t" style="left:1020px;width:800px;text-align:center;top:274px;font-size:16.5px;line-height:16.5px;color:#333333;font-weight:400;font-style:normal;transform:scaleX(.95)">H</div>
<div class="r" style="left:1491px;top:272px;width:1px;height:21px;background:#d4d4d4;"></div>
<div class="t" style="left:1101px;width:800px;text-align:center;top:274px;font-size:16.5px;line-height:16.5px;color:#333333;font-weight:400;font-style:normal;transform:scaleX(.95)">I</div>
<div class="r" style="left:1509px;top:272px;width:1px;height:21px;background:#d4d4d4;"></div>
<div class="r" style="left:1510px;top:270px;width:116px;height:23px;background:#e1e1e1;"></div>
<div class="r" style="left:1509px;top:291.5px;width:117px;height:2px;background:#107c41;"></div>
<div class="t" style="left:1168px;width:800px;text-align:center;top:274px;font-size:16.5px;line-height:16.5px;color:#0e6a36;font-weight:400;font-style:normal;transform:scaleX(.95)">J</div>
<div class="r" style="left:1625px;top:272px;width:1px;height:21px;background:#d4d4d4;"></div>
<div class="t" style="left:1266px;width:800px;text-align:center;top:274px;font-size:16.5px;line-height:16.5px;color:#333333;font-weight:400;font-style:normal;transform:scaleX(.95)">K</div>
<div class="r" style="left:1705px;top:272px;width:1px;height:21px;background:#d4d4d4;"></div>
<div class="t" style="left:1346px;width:800px;text-align:center;top:274px;font-size:16.5px;line-height:16.5px;color:#333333;font-weight:400;font-style:normal;transform:scaleX(.95)">L</div>
<div class="r" style="left:1785px;top:272px;width:1px;height:21px;background:#d4d4d4;"></div>
<div class="t" style="left:1426px;width:800px;text-align:center;top:274px;font-size:16.5px;line-height:16.5px;color:#333333;font-weight:400;font-style:normal;transform:scaleX(.95)">M</div>
<div class="r" style="left:1865px;top:272px;width:1px;height:21px;background:#d4d4d4;"></div>
<div class="t" style="left:1481px;width:800px;text-align:center;top:274px;font-size:16.5px;line-height:16.5px;color:#333333;font-weight:400;font-style:normal;transform:scaleX(.95)"></div>
<div class="r" style="left:1896px;top:272px;width:1px;height:21px;background:#d4d4d4;"></div>
<div class="r" style="left:34px;top:270px;width:1px;height:24px;background:#bdbdbd;"></div>
<div class="r" style="left:1px;top:294px;width:33px;height:670px;background:#f0f0f0;"></div>
<div class="r" style="left:34px;top:294px;width:1px;height:670px;background:#a8a8a8;"></div>
<div class="t" style="left:1px;width:32px;text-align:center;top:298.5px;font-size:16.5px;line-height:16.5px;color:#333333;transform:scaleX(.95)">1</div>
<div class="r" style="left:1px;top:317px;width:33px;height:1px;background:#cfcfcf;"></div>
<div class="t" style="left:1px;width:32px;text-align:center;top:363.2px;font-size:16.5px;line-height:16.5px;color:#333333;transform:scaleX(.95)">2</div>
<div class="r" style="left:1px;top:381px;width:33px;height:1px;background:#cfcfcf;"></div>
<div class="t" style="left:1px;width:32px;text-align:center;top:410.5px;font-size:16.5px;line-height:16.5px;color:#333333;transform:scaleX(.95)">3</div>
<div class="r" style="left:1px;top:432px;width:33px;height:1px;background:#cfcfcf;"></div>
<div class="t" style="left:1px;width:32px;text-align:center;top:438px;font-size:16.5px;line-height:16.5px;color:#333333;transform:scaleX(.95)">4</div>
<div class="r" style="left:1px;top:458px;width:33px;height:1px;background:#cfcfcf;"></div>
<div class="t" style="left:1px;width:32px;text-align:center;top:464px;font-size:16.5px;line-height:16.5px;color:#333333;transform:scaleX(.95)">5</div>
<div class="r" style="left:1px;top:484px;width:33px;height:1px;background:#cfcfcf;"></div>
<div class="r" style="left:1px;top:485px;width:33px;height:25px;background:#e1e1e1;"></div>
<div class="r" style="left:33px;top:484px;width:2px;height:27px;background:#107c41;"></div>
<div class="t" style="left:1px;width:32px;text-align:center;top:490px;font-size:16.5px;line-height:16.5px;color:#0e6a36;transform:scaleX(.95)">6</div>
<div class="r" style="left:1px;top:510px;width:33px;height:1px;background:#cfcfcf;"></div>
<div class="t" style="left:1px;width:32px;text-align:center;top:516px;font-size:16.5px;line-height:16.5px;color:#333333;transform:scaleX(.95)">7</div>
<div class="r" style="left:1px;top:536px;width:33px;height:1px;background:#cfcfcf;"></div>
<div class="t" style="left:1px;width:32px;text-align:center;top:542px;font-size:16.5px;line-height:16.5px;color:#333333;transform:scaleX(.95)">8</div>
<div class="r" style="left:1px;top:562px;width:33px;height:1px;background:#cfcfcf;"></div>
<div class="t" style="left:1px;width:32px;text-align:center;top:568px;font-size:16.5px;line-height:16.5px;color:#333333;transform:scaleX(.95)">9</div>
<div class="r" style="left:1px;top:588px;width:33px;height:1px;background:#cfcfcf;"></div>
<div class="t" style="left:1px;width:32px;text-align:center;top:594px;font-size:16.5px;line-height:16.5px;color:#333333;transform:scaleX(.95)">10</div>
<div class="r" style="left:1px;top:614px;width:33px;height:1px;background:#cfcfcf;"></div>
<div class="t" style="left:1px;width:32px;text-align:center;top:618px;font-size:16.5px;line-height:16.5px;color:#333333;transform:scaleX(.95)">11</div>
<div class="r" style="left:1px;top:638px;width:33px;height:1px;background:#cfcfcf;"></div>
<div class="t" style="left:1px;width:32px;text-align:center;top:642px;font-size:16.5px;line-height:16.5px;color:#333333;transform:scaleX(.95)">12</div>
<div class="r" style="left:1px;top:662px;width:33px;height:1px;background:#cfcfcf;"></div>
<div class="t" style="left:1px;width:32px;text-align:center;top:666px;font-size:16.5px;line-height:16.5px;color:#333333;transform:scaleX(.95)">13</div>
<div class="r" style="left:1px;top:686px;width:33px;height:1px;background:#cfcfcf;"></div>
<div class="t" style="left:1px;width:32px;text-align:center;top:690px;font-size:16.5px;line-height:16.5px;color:#333333;transform:scaleX(.95)">14</div>
<div class="r" style="left:1px;top:710px;width:33px;height:1px;background:#cfcfcf;"></div>
<div class="t" style="left:1px;width:32px;text-align:center;top:714px;font-size:16.5px;line-height:16.5px;color:#333333;transform:scaleX(.95)">15</div>
<div class="r" style="left:1px;top:734px;width:33px;height:1px;background:#cfcfcf;"></div>
<div class="t" style="left:1px;width:32px;text-align:center;top:738px;font-size:16.5px;line-height:16.5px;color:#333333;transform:scaleX(.95)">16</div>
<div class="r" style="left:1px;top:758px;width:33px;height:1px;background:#cfcfcf;"></div>
<div class="t" style="left:1px;width:32px;text-align:center;top:762px;font-size:16.5px;line-height:16.5px;color:#333333;transform:scaleX(.95)">17</div>
<div class="r" style="left:1px;top:782px;width:33px;height:1px;background:#cfcfcf;"></div>
<div class="t" style="left:1px;width:32px;text-align:center;top:786px;font-size:16.5px;line-height:16.5px;color:#333333;transform:scaleX(.95)">18</div>
<div class="r" style="left:1px;top:806px;width:33px;height:1px;background:#cfcfcf;"></div>
<div class="t" style="left:1px;width:32px;text-align:center;top:810px;font-size:16.5px;line-height:16.5px;color:#333333;transform:scaleX(.95)">19</div>
<div class="r" style="left:1px;top:830px;width:33px;height:1px;background:#cfcfcf;"></div>
<div class="t" style="left:1px;width:32px;text-align:center;top:834px;font-size:16.5px;line-height:16.5px;color:#333333;transform:scaleX(.95)">20</div>
<div class="r" style="left:1px;top:854px;width:33px;height:1px;background:#cfcfcf;"></div>
<div class="t" style="left:1px;width:32px;text-align:center;top:858px;font-size:16.5px;line-height:16.5px;color:#333333;transform:scaleX(.95)">21</div>
<div class="r" style="left:1px;top:878px;width:33px;height:1px;background:#cfcfcf;"></div>
<div class="t" style="left:1px;width:32px;text-align:center;top:882px;font-size:16.5px;line-height:16.5px;color:#333333;transform:scaleX(.95)">22</div>
<div class="r" style="left:1px;top:902px;width:33px;height:1px;background:#cfcfcf;"></div>
<div class="t" style="left:1px;width:32px;text-align:center;top:906px;font-size:16.5px;line-height:16.5px;color:#333333;transform:scaleX(.95)">23</div>
<div class="r" style="left:1px;top:926px;width:33px;height:1px;background:#cfcfcf;"></div>
<div class="t" style="left:1px;width:32px;text-align:center;top:930px;font-size:16.5px;line-height:16.5px;color:#333333;transform:scaleX(.95)">24</div>
<div class="r" style="left:1px;top:950px;width:33px;height:1px;background:#cfcfcf;"></div>
<div class="t" style="left:1px;width:32px;text-align:center;top:954px;font-size:16.5px;line-height:16.5px;color:#333333;transform:scaleX(.95)">25</div>
<div class="r" style="left:1px;top:974px;width:33px;height:1px;background:#cfcfcf;"></div>
<div class="r" style="left:35px;top:294px;width:1861px;height:670px;background:#ffffff;"></div>
<div class="r" style="left:0;top:0;width:1921px;height:1020px;pointer-events:none">
</div>
<div class="r" style="left:35px;top:294px;width:1861px;height:670px;overflow:hidden">
<div class="t" style="left:17.5px;width:1347.5px;top:11.4px;font-size:48px;line-height:55.20px;text-align:left;color:#000;font-weight:700;font-style:normal;letter-spacing:-1.45px;text-shadow:1px 1.2px 2px rgba(0,0,0,.35);-webkit-text-stroke:0.7px #000"><span style="display:inline-block;transform:scaleX(0.975);transform-origin:0 50%">CADASTROS DE TREINAMENTOS</span></div>
<div class="r" style="left:17px;top:88px;width:1440px;height:51px;background:#000"></div>
<div class="t" style="left:-553.0px;width:1200px;top:101.6px;font-size:20px;line-height:23.00px;text-align:center;color:#fff;font-weight:700;font-style:normal;"><span style="display:inline-block;transform:scaleX(1.0);transform-origin:50% 50%">Nº</span></div>
<div class="t" style="left:-262.5px;width:1200px;top:101.6px;font-size:20px;line-height:23.00px;text-align:center;color:#fff;font-weight:700;font-style:normal;"><span style="display:inline-block;transform:scaleX(1.064);transform-origin:50% 50%">Treinamento/Curso</span></div>
<div class="t" style="left:85.5px;width:1200px;top:101.6px;font-size:20px;line-height:23.00px;text-align:center;color:#fff;font-weight:700;font-style:normal;"><span style="display:inline-block;transform:scaleX(1.089);transform-origin:50% 50%">Externo/Interno</span></div>
<div class="t" style="left:261.5px;width:1200px;top:101.6px;font-size:20px;line-height:23.00px;text-align:center;color:#fff;font-weight:700;font-style:normal;"><span style="display:inline-block;transform:scaleX(1.04);transform-origin:50% 50%">Empresa</span></div>
<div class="t" style="left:440.5px;width:1200px;top:101.6px;font-size:20px;line-height:23.00px;text-align:center;color:#fff;font-weight:700;font-style:normal;"><span style="display:inline-block;transform:scaleX(1.046);transform-origin:50% 50%">Crítico/Obrigatório</span></div>
<div class="t" style="left:627.0px;width:1200px;top:101.6px;font-size:20px;line-height:23.00px;text-align:center;color:#fff;font-weight:700;font-style:normal;"><span style="display:inline-block;transform:scaleX(1.055);transform-origin:50% 50%">Validade (Mês)</span></div>
<div class="t" style="left:785.0px;width:1200px;top:101.6px;font-size:20px;line-height:23.00px;text-align:center;color:#fff;font-weight:700;font-style:normal;"><span style="display:inline-block;transform:scaleX(1.013);transform-origin:50% 50%">Observação</span></div>
<div class="r" style="left:1474px;top:88px;width:117px;height:51px;background:#000"></div>
<div class="t" style="left:932.5px;width:1200px;top:101.6px;font-size:20px;line-height:23.00px;text-align:center;color:#fff;font-weight:700;font-style:normal;"><span style="display:inline-block;transform:scaleX(1.0);transform-origin:50% 50%">TIPO</span></div>
<div class="r" style="left:17px;top:164px;width:1440px;height:1px;background:#000"></div>
<div class="t" style="left:-553.0px;width:1200px;top:142.6px;font-size:17px;line-height:19.55px;text-align:center;color:#000;font-weight:400;font-style:normal;"><span style="display:inline-block;transform:scaleX(0.95);transform-origin:50% 50%">1</span></div>
<div class="t" style="left:-265.5px;width:1200px;top:142.6px;font-size:17px;line-height:19.55px;text-align:center;color:#000;font-weight:400;font-style:normal;"><span style="display:inline-block;transform:scaleX(0.885);transform-origin:50% 50%">Integração  de QSMS -  NR 01</span></div>
<div class="t" style="left:90.5px;width:1200px;top:142.6px;font-size:17px;line-height:19.55px;text-align:center;color:#000;font-weight:400;font-style:normal;"><span style="display:inline-block;transform:scaleX(0.965);transform-origin:50% 50%">Interno</span></div>
<div class="t" style="left:261.5px;width:1200px;top:142.6px;font-size:17px;line-height:19.55px;text-align:center;color:#000;font-weight:400;font-style:normal;"><span style="display:inline-block;transform:scaleX(0.95);transform-origin:50% 50%">Empresa X</span></div>
<div class="t" style="left:440.5px;width:1200px;top:142.6px;font-size:17px;line-height:19.55px;text-align:center;color:#000;font-weight:400;font-style:normal;"><span style="display:inline-block;transform:scaleX(0.88);transform-origin:50% 50%">SIM</span></div>
<div class="t" style="left:627.0px;width:1200px;top:142.6px;font-size:17px;line-height:19.55px;text-align:center;color:#000;font-weight:400;font-style:normal;"><span style="display:inline-block;transform:scaleX(0.95);transform-origin:50% 50%">0</span></div>
<div class="r" style="left:17px;top:190px;width:1440px;height:1px;background:#000"></div>
<div class="t" style="left:-553.0px;width:1200px;top:168.6px;font-size:17px;line-height:19.55px;text-align:center;color:#000;font-weight:400;font-style:normal;"><span style="display:inline-block;transform:scaleX(0.95);transform-origin:50% 50%">2</span></div>
<div class="t" style="left:-262.5px;width:1200px;top:168.6px;font-size:17px;line-height:19.55px;text-align:center;color:#000;font-weight:400;font-style:normal;"><span style="display:inline-block;transform:scaleX(0.92);transform-origin:50% 50%">NR 5 - CIPA. KL.GS.02.02</span></div>
<div class="t" style="left:90.5px;width:1200px;top:168.6px;font-size:17px;line-height:19.55px;text-align:center;color:#000;font-weight:400;font-style:normal;"><span style="display:inline-block;transform:scaleX(0.965);transform-origin:50% 50%">Interno</span></div>
<div class="t" style="left:261.5px;width:1200px;top:168.6px;font-size:17px;line-height:19.55px;text-align:center;color:#000;font-weight:400;font-style:normal;"><span style="display:inline-block;transform:scaleX(0.95);transform-origin:50% 50%">Empresa X</span></div>
<div class="t" style="left:440.5px;width:1200px;top:168.6px;font-size:17px;line-height:19.55px;text-align:center;color:#000;font-weight:400;font-style:normal;"><span style="display:inline-block;transform:scaleX(0.88);transform-origin:50% 50%">NÃO</span></div>
<div class="t" style="left:627.0px;width:1200px;top:168.6px;font-size:17px;line-height:19.55px;text-align:center;color:#000;font-weight:400;font-style:normal;"><span style="display:inline-block;transform:scaleX(0.95);transform-origin:50% 50%">24</span></div>
<div class="r" style="left:17px;top:216px;width:1440px;height:1px;background:#000"></div>
<div class="t" style="left:-553.0px;width:1200px;top:194.6px;font-size:17px;line-height:19.55px;text-align:center;color:#000;font-weight:400;font-style:normal;"><span style="display:inline-block;transform:scaleX(0.95);transform-origin:50% 50%">3</span></div>
<div class="t" style="left:-262.5px;width:1200px;top:194.6px;font-size:17px;line-height:19.55px;text-align:center;color:#000;font-weight:400;font-style:normal;"><span style="display:inline-block;transform:scaleX(0.92);transform-origin:50% 50%">NR 06 - Equipamento de proteção individual.  KL.GS.02.01</span></div>
<div class="t" style="left:90.5px;width:1200px;top:194.6px;font-size:17px;line-height:19.55px;text-align:center;color:#000;font-weight:400;font-style:normal;"><span style="display:inline-block;transform:scaleX(0.965);transform-origin:50% 50%">Interno</span></div>
<div class="t" style="left:261.5px;width:1200px;top:194.6px;font-size:17px;line-height:19.55px;text-align:center;color:#000;font-weight:400;font-style:normal;"><span style="display:inline-block;transform:scaleX(0.95);transform-origin:50% 50%">Empresa X</span></div>
<div class="t" style="left:440.5px;width:1200px;top:194.6px;font-size:17px;line-height:19.55px;text-align:center;color:#000;font-weight:400;font-style:normal;"><span style="display:inline-block;transform:scaleX(0.88);transform-origin:50% 50%">SIM</span></div>
<div class="t" style="left:627.0px;width:1200px;top:194.6px;font-size:17px;line-height:19.55px;text-align:center;color:#000;font-weight:400;font-style:normal;"><span style="display:inline-block;transform:scaleX(0.95);transform-origin:50% 50%">24</span></div>
<div class="r" style="left:17px;top:242px;width:1440px;height:1px;background:#000"></div>
<div class="t" style="left:-553.0px;width:1200px;top:220.6px;font-size:17px;line-height:19.55px;text-align:center;color:#000;font-weight:400;font-style:normal;"><span style="display:inline-block;transform:scaleX(0.95);transform-origin:50% 50%">4</span></div>
<div class="t" style="left:-262.5px;width:1200px;top:220.6px;font-size:17px;line-height:19.55px;text-align:center;color:#000;font-weight:400;font-style:normal;"><span style="display:inline-block;transform:scaleX(0.92);transform-origin:50% 50%">PPR - programa de proteção respiratória. (divulgação)</span></div>
<div class="t" style="left:90.5px;width:1200px;top:220.6px;font-size:17px;line-height:19.55px;text-align:center;color:#000;font-weight:400;font-style:normal;"><span style="display:inline-block;transform:scaleX(0.965);transform-origin:50% 50%">Interno</span></div>
<div class="t" style="left:261.5px;width:1200px;top:220.6px;font-size:17px;line-height:19.55px;text-align:center;color:#000;font-weight:400;font-style:normal;"><span style="display:inline-block;transform:scaleX(0.95);transform-origin:50% 50%">Empresa X</span></div>
<div class="t" style="left:440.5px;width:1200px;top:220.6px;font-size:17px;line-height:19.55px;text-align:center;color:#000;font-weight:400;font-style:normal;"><span style="display:inline-block;transform:scaleX(0.88);transform-origin:50% 50%">SIM</span></div>
<div class="t" style="left:627.0px;width:1200px;top:220.6px;font-size:17px;line-height:19.55px;text-align:center;color:#000;font-weight:400;font-style:normal;"><span style="display:inline-block;transform:scaleX(0.95);transform-origin:50% 50%">0</span></div>
<div class="r" style="left:17px;top:268px;width:1440px;height:1px;background:#000"></div>
<div class="t" style="left:-553.0px;width:1200px;top:246.6px;font-size:17px;line-height:19.55px;text-align:center;color:#000;font-weight:400;font-style:normal;"><span style="display:inline-block;transform:scaleX(0.95);transform-origin:50% 50%">5</span></div>
<div class="t" style="left:-262.5px;width:1200px;top:246.6px;font-size:17px;line-height:19.55px;text-align:center;color:#000;font-weight:400;font-style:normal;"><span style="display:inline-block;transform:scaleX(0.92);transform-origin:50% 50%">PCA - Programa de conservação auditiva. (divulgação)</span></div>
<div class="t" style="left:90.5px;width:1200px;top:246.6px;font-size:17px;line-height:19.55px;text-align:center;color:#000;font-weight:400;font-style:normal;"><span style="display:inline-block;transform:scaleX(0.965);transform-origin:50% 50%">Interno</span></div>
<div class="t" style="left:261.5px;width:1200px;top:246.6px;font-size:17px;line-height:19.55px;text-align:center;color:#000;font-weight:400;font-style:normal;"><span style="display:inline-block;transform:scaleX(0.95);transform-origin:50% 50%">Empresa X</span></div>
<div class="t" style="left:440.5px;width:1200px;top:246.6px;font-size:17px;line-height:19.55px;text-align:center;color:#000;font-weight:400;font-style:normal;"><span style="display:inline-block;transform:scaleX(0.88);transform-origin:50% 50%">SIM</span></div>
<div class="t" style="left:627.0px;width:1200px;top:246.6px;font-size:17px;line-height:19.55px;text-align:center;color:#000;font-weight:400;font-style:normal;"><span style="display:inline-block;transform:scaleX(0.95);transform-origin:50% 50%">0</span></div>
<div class="r" style="left:17px;top:294px;width:1440px;height:1px;background:#000"></div>
<div class="t" style="left:-553.0px;width:1200px;top:272.6px;font-size:17px;line-height:19.55px;text-align:center;color:#000;font-weight:400;font-style:normal;"><span style="display:inline-block;transform:scaleX(0.95);transform-origin:50% 50%">6</span></div>
<div class="t" style="left:-262.5px;width:1200px;top:272.6px;font-size:17px;line-height:19.55px;text-align:center;color:#000;font-weight:400;font-style:normal;"><span style="display:inline-block;transform:scaleX(0.92);transform-origin:50% 50%">NR 10 - Instalação e serviço em eletricidade.</span></div>
<div class="t" style="left:90.5px;width:1200px;top:272.6px;font-size:17px;line-height:19.55px;text-align:center;color:#000;font-weight:400;font-style:normal;"><span style="display:inline-block;transform:scaleX(0.965);transform-origin:50% 50%">Externo</span></div>
<div class="t" style="left:261.5px;width:1200px;top:272.6px;font-size:17px;line-height:19.55px;text-align:center;color:#000;font-weight:400;font-style:normal;"><span style="display:inline-block;transform:scaleX(0.95);transform-origin:50% 50%">Empresa Terceira</span></div>
<div class="t" style="left:440.5px;width:1200px;top:272.6px;font-size:17px;line-height:19.55px;text-align:center;color:#000;font-weight:400;font-style:normal;"><span style="display:inline-block;transform:scaleX(0.88);transform-origin:50% 50%">NÃO</span></div>
<div class="t" style="left:627.0px;width:1200px;top:272.6px;font-size:17px;line-height:19.55px;text-align:center;color:#000;font-weight:400;font-style:normal;"><span style="display:inline-block;transform:scaleX(0.95);transform-origin:50% 50%">24</span></div>
<div class="r" style="left:17px;top:320px;width:1440px;height:1px;background:#000"></div>
<div class="t" style="left:-553.0px;width:1200px;top:298.6px;font-size:17px;line-height:19.55px;text-align:center;color:#000;font-weight:400;font-style:normal;"><span style="display:inline-block;transform:scaleX(0.95);transform-origin:50% 50%">7</span></div>
<div class="t" style="left:-262.5px;width:1200px;top:298.6px;font-size:17px;line-height:19.55px;text-align:center;color:#000;font-weight:400;font-style:normal;"><span style="display:inline-block;transform:scaleX(0.92);transform-origin:50% 50%">NR 11 - Transporte, Movimentação, e manuseio de materiais. (Talhas )</span></div>
<div class="t" style="left:90.5px;width:1200px;top:298.6px;font-size:17px;line-height:19.55px;text-align:center;color:#000;font-weight:400;font-style:normal;"><span style="display:inline-block;transform:scaleX(0.965);transform-origin:50% 50%">Externo</span></div>
<div class="t" style="left:261.5px;width:1200px;top:298.6px;font-size:17px;line-height:19.55px;text-align:center;color:#000;font-weight:400;font-style:normal;"><span style="display:inline-block;transform:scaleX(0.95);transform-origin:50% 50%">Empresa Terceira</span></div>
<div class="t" style="left:440.5px;width:1200px;top:298.6px;font-size:17px;line-height:19.55px;text-align:center;color:#000;font-weight:400;font-style:normal;"><span style="display:inline-block;transform:scaleX(0.88);transform-origin:50% 50%">SIM</span></div>
<div class="t" style="left:627.0px;width:1200px;top:298.6px;font-size:17px;line-height:19.55px;text-align:center;color:#000;font-weight:400;font-style:normal;"><span style="display:inline-block;transform:scaleX(0.95);transform-origin:50% 50%">12</span></div>
<div class="r" style="left:17px;top:344px;width:1440px;height:1px;background:#000"></div>
<div class="t" style="left:-553.0px;width:1200px;top:323.6px;font-size:17px;line-height:19.55px;text-align:center;color:#000;font-weight:400;font-style:normal;"><span style="display:inline-block;transform:scaleX(0.95);transform-origin:50% 50%">8</span></div>
<div class="t" style="left:-262.5px;width:1200px;top:323.6px;font-size:17px;line-height:19.55px;text-align:center;color:#000;font-weight:400;font-style:normal;"><span style="display:inline-block;transform:scaleX(0.92);transform-origin:50% 50%">NR 11 - Transporte, Movimentação, e manuseio de materiais. (Munck )</span></div>
<div class="t" style="left:90.5px;width:1200px;top:323.6px;font-size:17px;line-height:19.55px;text-align:center;color:#000;font-weight:400;font-style:normal;"><span style="display:inline-block;transform:scaleX(0.965);transform-origin:50% 50%">Externo</span></div>
<div class="t" style="left:261.5px;width:1200px;top:323.6px;font-size:17px;line-height:19.55px;text-align:center;color:#000;font-weight:400;font-style:normal;"><span style="display:inline-block;transform:scaleX(0.95);transform-origin:50% 50%">Empresa Terceira</span></div>
<div class="t" style="left:440.5px;width:1200px;top:323.6px;font-size:17px;line-height:19.55px;text-align:center;color:#000;font-weight:400;font-style:normal;"><span style="display:inline-block;transform:scaleX(0.88);transform-origin:50% 50%">SIM</span></div>
<div class="t" style="left:627.0px;width:1200px;top:323.6px;font-size:17px;line-height:19.55px;text-align:center;color:#000;font-weight:400;font-style:normal;"><span style="display:inline-block;transform:scaleX(0.95);transform-origin:50% 50%">12</span></div>
<div class="r" style="left:17px;top:368px;width:1440px;height:1px;background:#000"></div>
<div class="t" style="left:-553.0px;width:1200px;top:347.6px;font-size:17px;line-height:19.55px;text-align:center;color:#000;font-weight:400;font-style:normal;"><span style="display:inline-block;transform:scaleX(0.95);transform-origin:50% 50%">9</span></div>
<div class="t" style="left:-262.5px;width:1200px;top:347.6px;font-size:17px;line-height:19.55px;text-align:center;color:#000;font-weight:400;font-style:normal;"><span style="display:inline-block;transform:scaleX(0.92);transform-origin:50% 50%">NR 12 - Máquinas e Equipamentos. (Rotativas)</span></div>
<div class="t" style="left:90.5px;width:1200px;top:347.6px;font-size:17px;line-height:19.55px;text-align:center;color:#000;font-weight:400;font-style:normal;"><span style="display:inline-block;transform:scaleX(0.965);transform-origin:50% 50%">Interno</span></div>
<div class="t" style="left:261.5px;width:1200px;top:347.6px;font-size:17px;line-height:19.55px;text-align:center;color:#000;font-weight:400;font-style:normal;"><span style="display:inline-block;transform:scaleX(0.95);transform-origin:50% 50%">Empresa X</span></div>
<div class="t" style="left:440.5px;width:1200px;top:347.6px;font-size:17px;line-height:19.55px;text-align:center;color:#000;font-weight:400;font-style:normal;"><span style="display:inline-block;transform:scaleX(0.88);transform-origin:50% 50%">SIM</span></div>
<div class="t" style="left:627.0px;width:1200px;top:347.6px;font-size:17px;line-height:19.55px;text-align:center;color:#000;font-weight:400;font-style:normal;"><span style="display:inline-block;transform:scaleX(0.95);transform-origin:50% 50%">0</span></div>
<div class="r" style="left:17px;top:392px;width:1440px;height:1px;background:#000"></div>
<div class="t" style="left:-553.0px;width:1200px;top:371.6px;font-size:17px;line-height:19.55px;text-align:center;color:#000;font-weight:400;font-style:normal;"><span style="display:inline-block;transform:scaleX(0.95);transform-origin:50% 50%">10</span></div>
<div class="t" style="left:-262.5px;width:1200px;top:371.6px;font-size:17px;line-height:19.55px;text-align:center;color:#000;font-weight:400;font-style:normal;"><span style="display:inline-block;transform:scaleX(0.92);transform-origin:50% 50%">NR 12 - Máquinas e Equipamentos. (Prensa)</span></div>
<div class="t" style="left:90.5px;width:1200px;top:371.6px;font-size:17px;line-height:19.55px;text-align:center;color:#000;font-weight:400;font-style:normal;"><span style="display:inline-block;transform:scaleX(0.965);transform-origin:50% 50%">Interno</span></div>
<div class="t" style="left:261.5px;width:1200px;top:371.6px;font-size:17px;line-height:19.55px;text-align:center;color:#000;font-weight:400;font-style:normal;"><span style="display:inline-block;transform:scaleX(0.95);transform-origin:50% 50%">Empresa X</span></div>
<div class="t" style="left:440.5px;width:1200px;top:371.6px;font-size:17px;line-height:19.55px;text-align:center;color:#000;font-weight:400;font-style:normal;"><span style="display:inline-block;transform:scaleX(0.88);transform-origin:50% 50%">SIM</span></div>
<div class="t" style="left:627.0px;width:1200px;top:371.6px;font-size:17px;line-height:19.55px;text-align:center;color:#000;font-weight:400;font-style:normal;"><span style="display:inline-block;transform:scaleX(0.95);transform-origin:50% 50%">0</span></div>
<div class="r" style="left:17px;top:416px;width:1440px;height:1px;background:#000"></div>
<div class="t" style="left:-553.0px;width:1200px;top:395.6px;font-size:17px;line-height:19.55px;text-align:center;color:#000;font-weight:400;font-style:normal;"><span style="display:inline-block;transform:scaleX(0.95);transform-origin:50% 50%">11</span></div>
<div class="t" style="left:-262.5px;width:1200px;top:395.6px;font-size:17px;line-height:19.55px;text-align:center;color:#000;font-weight:400;font-style:normal;"><span style="display:inline-block;transform:scaleX(0.92);transform-origin:50% 50%">NR 13 - Caldeira e Vaso de Pressão</span></div>
<div class="t" style="left:90.5px;width:1200px;top:395.6px;font-size:17px;line-height:19.55px;text-align:center;color:#000;font-weight:400;font-style:normal;"><span style="display:inline-block;transform:scaleX(0.965);transform-origin:50% 50%">Externo</span></div>
<div class="t" style="left:261.5px;width:1200px;top:395.6px;font-size:17px;line-height:19.55px;text-align:center;color:#000;font-weight:400;font-style:normal;"><span style="display:inline-block;transform:scaleX(0.95);transform-origin:50% 50%">Empresa Terceira</span></div>
<div class="t" style="left:440.5px;width:1200px;top:395.6px;font-size:17px;line-height:19.55px;text-align:center;color:#000;font-weight:400;font-style:normal;"><span style="display:inline-block;transform:scaleX(0.88);transform-origin:50% 50%">NÃO</span></div>
<div class="t" style="left:627.0px;width:1200px;top:395.6px;font-size:17px;line-height:19.55px;text-align:center;color:#000;font-weight:400;font-style:normal;"><span style="display:inline-block;transform:scaleX(0.95);transform-origin:50% 50%">0</span></div>
<div class="r" style="left:17px;top:440px;width:1440px;height:1px;background:#000"></div>
<div class="t" style="left:-553.0px;width:1200px;top:419.6px;font-size:17px;line-height:19.55px;text-align:center;color:#000;font-weight:400;font-style:normal;"><span style="display:inline-block;transform:scaleX(0.95);transform-origin:50% 50%">12</span></div>
<div class="t" style="left:-262.5px;width:1200px;top:419.6px;font-size:17px;line-height:19.55px;text-align:center;color:#000;font-weight:400;font-style:normal;"><span style="display:inline-block;transform:scaleX(0.92);transform-origin:50% 50%">NR 17 - Transporte Manual de Carga</span></div>
<div class="t" style="left:90.5px;width:1200px;top:419.6px;font-size:17px;line-height:19.55px;text-align:center;color:#000;font-weight:400;font-style:normal;"><span style="display:inline-block;transform:scaleX(0.965);transform-origin:50% 50%">Interno</span></div>
<div class="t" style="left:261.5px;width:1200px;top:419.6px;font-size:17px;line-height:19.55px;text-align:center;color:#000;font-weight:400;font-style:normal;"><span style="display:inline-block;transform:scaleX(0.95);transform-origin:50% 50%">Empresa X</span></div>
<div class="t" style="left:440.5px;width:1200px;top:419.6px;font-size:17px;line-height:19.55px;text-align:center;color:#000;font-weight:400;font-style:normal;"><span style="display:inline-block;transform:scaleX(0.88);transform-origin:50% 50%">SIM</span></div>
<div class="t" style="left:627.0px;width:1200px;top:419.6px;font-size:17px;line-height:19.55px;text-align:center;color:#000;font-weight:400;font-style:normal;"><span style="display:inline-block;transform:scaleX(0.95);transform-origin:50% 50%">12</span></div>
<div class="r" style="left:17px;top:464px;width:1440px;height:1px;background:#000"></div>
<div class="t" style="left:-553.0px;width:1200px;top:443.6px;font-size:17px;line-height:19.55px;text-align:center;color:#000;font-weight:400;font-style:normal;"><span style="display:inline-block;transform:scaleX(0.95);transform-origin:50% 50%">13</span></div>
<div class="t" style="left:-262.5px;width:1200px;top:443.6px;font-size:17px;line-height:19.55px;text-align:center;color:#000;font-weight:400;font-style:normal;"><span style="display:inline-block;transform:scaleX(0.92);transform-origin:50% 50%">NR 20 - Liquido Combustivel e Inflamáveis</span></div>
<div class="t" style="left:90.5px;width:1200px;top:443.6px;font-size:17px;line-height:19.55px;text-align:center;color:#000;font-weight:400;font-style:normal;"><span style="display:inline-block;transform:scaleX(0.965);transform-origin:50% 50%">Externo</span></div>
<div class="t" style="left:261.5px;width:1200px;top:443.6px;font-size:17px;line-height:19.55px;text-align:center;color:#000;font-weight:400;font-style:normal;"><span style="display:inline-block;transform:scaleX(0.95);transform-origin:50% 50%">Empresa Terceira</span></div>
<div class="t" style="left:440.5px;width:1200px;top:443.6px;font-size:17px;line-height:19.55px;text-align:center;color:#000;font-weight:400;font-style:normal;"><span style="display:inline-block;transform:scaleX(0.88);transform-origin:50% 50%">SIM</span></div>
<div class="t" style="left:627.0px;width:1200px;top:443.6px;font-size:17px;line-height:19.55px;text-align:center;color:#000;font-weight:400;font-style:normal;"><span style="display:inline-block;transform:scaleX(0.95);transform-origin:50% 50%">36</span></div>
<div class="r" style="left:17px;top:488px;width:1440px;height:1px;background:#000"></div>
<div class="t" style="left:-553.0px;width:1200px;top:467.6px;font-size:17px;line-height:19.55px;text-align:center;color:#000;font-weight:400;font-style:normal;"><span style="display:inline-block;transform:scaleX(0.95);transform-origin:50% 50%">14</span></div>
<div class="t" style="left:-262.5px;width:1200px;top:467.6px;font-size:17px;line-height:19.55px;text-align:center;color:#000;font-weight:400;font-style:normal;"><span style="display:inline-block;transform:scaleX(0.92);transform-origin:50% 50%">NR 23 - Proteção Contra Incêndio (Brigada de Emegência) KL.GS.03.05</span></div>
<div class="t" style="left:90.5px;width:1200px;top:467.6px;font-size:17px;line-height:19.55px;text-align:center;color:#000;font-weight:400;font-style:normal;"><span style="display:inline-block;transform:scaleX(0.965);transform-origin:50% 50%">Externo</span></div>
<div class="t" style="left:261.5px;width:1200px;top:467.6px;font-size:17px;line-height:19.55px;text-align:center;color:#000;font-weight:400;font-style:normal;"><span style="display:inline-block;transform:scaleX(0.95);transform-origin:50% 50%">Empresa Terceira</span></div>
<div class="t" style="left:440.5px;width:1200px;top:467.6px;font-size:17px;line-height:19.55px;text-align:center;color:#000;font-weight:400;font-style:normal;"><span style="display:inline-block;transform:scaleX(0.88);transform-origin:50% 50%">SIM</span></div>
<div class="t" style="left:627.0px;width:1200px;top:467.6px;font-size:17px;line-height:19.55px;text-align:center;color:#000;font-weight:400;font-style:normal;"><span style="display:inline-block;transform:scaleX(0.95);transform-origin:50% 50%">12</span></div>
<div class="r" style="left:17px;top:512px;width:1440px;height:1px;background:#000"></div>
<div class="t" style="left:-553.0px;width:1200px;top:491.6px;font-size:17px;line-height:19.55px;text-align:center;color:#000;font-weight:400;font-style:normal;"><span style="display:inline-block;transform:scaleX(0.95);transform-origin:50% 50%">15</span></div>
<div class="t" style="left:-262.5px;width:1200px;top:491.6px;font-size:17px;line-height:19.55px;text-align:center;color:#000;font-weight:400;font-style:normal;"><span style="display:inline-block;transform:scaleX(0.92);transform-origin:50% 50%">NR 35 - Trabalho em Altura</span></div>
<div class="t" style="left:90.5px;width:1200px;top:491.6px;font-size:17px;line-height:19.55px;text-align:center;color:#000;font-weight:400;font-style:normal;"><span style="display:inline-block;transform:scaleX(0.965);transform-origin:50% 50%">Externo</span></div>
<div class="t" style="left:261.5px;width:1200px;top:491.6px;font-size:17px;line-height:19.55px;text-align:center;color:#000;font-weight:400;font-style:normal;"><span style="display:inline-block;transform:scaleX(0.95);transform-origin:50% 50%">Empresa Terceira</span></div>
<div class="t" style="left:440.5px;width:1200px;top:491.6px;font-size:17px;line-height:19.55px;text-align:center;color:#000;font-weight:400;font-style:normal;"><span style="display:inline-block;transform:scaleX(0.88);transform-origin:50% 50%">SIM</span></div>
<div class="t" style="left:627.0px;width:1200px;top:491.6px;font-size:17px;line-height:19.55px;text-align:center;color:#000;font-weight:400;font-style:normal;"><span style="display:inline-block;transform:scaleX(0.95);transform-origin:50% 50%">24</span></div>
<div class="r" style="left:17px;top:536px;width:1440px;height:1px;background:#000"></div>
<div class="t" style="left:-553.0px;width:1200px;top:515.6px;font-size:17px;line-height:19.55px;text-align:center;color:#000;font-weight:400;font-style:normal;"><span style="display:inline-block;transform:scaleX(0.95);transform-origin:50% 50%">16</span></div>
<div class="t" style="left:-262.5px;width:1200px;top:515.6px;font-size:17px;line-height:19.55px;text-align:center;color:#000;font-weight:400;font-style:normal;"><span style="display:inline-block;transform:scaleX(0.92);transform-origin:50% 50%">Simulação de Incêndio e Acidente</span></div>
<div class="t" style="left:90.5px;width:1200px;top:515.6px;font-size:17px;line-height:19.55px;text-align:center;color:#000;font-weight:400;font-style:normal;"><span style="display:inline-block;transform:scaleX(0.965);transform-origin:50% 50%">Interno</span></div>
<div class="t" style="left:261.5px;width:1200px;top:515.6px;font-size:17px;line-height:19.55px;text-align:center;color:#000;font-weight:400;font-style:normal;"><span style="display:inline-block;transform:scaleX(0.95);transform-origin:50% 50%">Empresa X</span></div>
<div class="t" style="left:440.5px;width:1200px;top:515.6px;font-size:17px;line-height:19.55px;text-align:center;color:#000;font-weight:400;font-style:normal;"><span style="display:inline-block;transform:scaleX(0.88);transform-origin:50% 50%">NÃO</span></div>
<div class="t" style="left:627.0px;width:1200px;top:515.6px;font-size:17px;line-height:19.55px;text-align:center;color:#000;font-weight:400;font-style:normal;"><span style="display:inline-block;transform:scaleX(0.95);transform-origin:50% 50%">12</span></div>
<div class="r" style="left:17px;top:560px;width:1440px;height:1px;background:#000"></div>
<div class="t" style="left:-553.0px;width:1200px;top:539.6px;font-size:17px;line-height:19.55px;text-align:center;color:#000;font-weight:400;font-style:normal;"><span style="display:inline-block;transform:scaleX(0.95);transform-origin:50% 50%">17</span></div>
<div class="t" style="left:-262.5px;width:1200px;top:539.6px;font-size:17px;line-height:19.55px;text-align:center;color:#000;font-weight:400;font-style:normal;"><span style="display:inline-block;transform:scaleX(0.92);transform-origin:50% 50%">Produto Químico e FISPQ</span></div>
<div class="t" style="left:90.5px;width:1200px;top:539.6px;font-size:17px;line-height:19.55px;text-align:center;color:#000;font-weight:400;font-style:normal;"><span style="display:inline-block;transform:scaleX(0.965);transform-origin:50% 50%">Interno</span></div>
<div class="t" style="left:261.5px;width:1200px;top:539.6px;font-size:17px;line-height:19.55px;text-align:center;color:#000;font-weight:400;font-style:normal;"><span style="display:inline-block;transform:scaleX(0.95);transform-origin:50% 50%">Empresa X</span></div>
<div class="t" style="left:440.5px;width:1200px;top:539.6px;font-size:17px;line-height:19.55px;text-align:center;color:#000;font-weight:400;font-style:normal;"><span style="display:inline-block;transform:scaleX(0.88);transform-origin:50% 50%">SIM</span></div>
<div class="t" style="left:627.0px;width:1200px;top:539.6px;font-size:17px;line-height:19.55px;text-align:center;color:#000;font-weight:400;font-style:normal;"><span style="display:inline-block;transform:scaleX(0.95);transform-origin:50% 50%">12</span></div>
<div class="r" style="left:17px;top:584px;width:1440px;height:1px;background:#000"></div>
<div class="t" style="left:-553.0px;width:1200px;top:563.6px;font-size:17px;line-height:19.55px;text-align:center;color:#000;font-weight:400;font-style:normal;"><span style="display:inline-block;transform:scaleX(0.95);transform-origin:50% 50%">18</span></div>
<div class="t" style="left:-262.5px;width:1200px;top:563.6px;font-size:17px;line-height:19.55px;text-align:center;color:#000;font-weight:400;font-style:normal;"><span style="display:inline-block;transform:scaleX(0.92);transform-origin:50% 50%">Plano de Atendimento e Emergência - PAE KL.GS.03.01</span></div>
<div class="t" style="left:90.5px;width:1200px;top:563.6px;font-size:17px;line-height:19.55px;text-align:center;color:#000;font-weight:400;font-style:normal;"><span style="display:inline-block;transform:scaleX(0.965);transform-origin:50% 50%">Interno</span></div>
<div class="t" style="left:261.5px;width:1200px;top:563.6px;font-size:17px;line-height:19.55px;text-align:center;color:#000;font-weight:400;font-style:normal;"><span style="display:inline-block;transform:scaleX(0.95);transform-origin:50% 50%">Empresa X</span></div>
<div class="t" style="left:440.5px;width:1200px;top:563.6px;font-size:17px;line-height:19.55px;text-align:center;color:#000;font-weight:400;font-style:normal;"><span style="display:inline-block;transform:scaleX(0.88);transform-origin:50% 50%">SIM</span></div>
<div class="t" style="left:627.0px;width:1200px;top:563.6px;font-size:17px;line-height:19.55px;text-align:center;color:#000;font-weight:400;font-style:normal;"><span style="display:inline-block;transform:scaleX(0.95);transform-origin:50% 50%">12</span></div>
<div class="r" style="left:17px;top:608px;width:1440px;height:1px;background:#000"></div>
<div class="t" style="left:-553.0px;width:1200px;top:587.6px;font-size:17px;line-height:19.55px;text-align:center;color:#000;font-weight:400;font-style:normal;"><span style="display:inline-block;transform:scaleX(0.95);transform-origin:50% 50%">19</span></div>
<div class="t" style="left:-262.5px;width:1200px;top:587.6px;font-size:17px;line-height:19.55px;text-align:center;color:#000;font-weight:400;font-style:normal;"><span style="display:inline-block;transform:scaleX(0.92);transform-origin:50% 50%">Comunicação de Acidente - PTO -ST-02</span></div>
<div class="t" style="left:90.5px;width:1200px;top:587.6px;font-size:17px;line-height:19.55px;text-align:center;color:#000;font-weight:400;font-style:normal;"><span style="display:inline-block;transform:scaleX(0.965);transform-origin:50% 50%">Externo</span></div>
<div class="t" style="left:261.5px;width:1200px;top:587.6px;font-size:17px;line-height:19.55px;text-align:center;color:#000;font-weight:400;font-style:normal;"><span style="display:inline-block;transform:scaleX(0.95);transform-origin:50% 50%">Empresa X</span></div>
<div class="t" style="left:440.5px;width:1200px;top:587.6px;font-size:17px;line-height:19.55px;text-align:center;color:#000;font-weight:400;font-style:normal;"><span style="display:inline-block;transform:scaleX(0.88);transform-origin:50% 50%">SIM</span></div>
<div class="t" style="left:627.0px;width:1200px;top:587.6px;font-size:17px;line-height:19.55px;text-align:center;color:#000;font-weight:400;font-style:normal;"><span style="display:inline-block;transform:scaleX(0.95);transform-origin:50% 50%">12</span></div>
<div class="r" style="left:17px;top:632px;width:1440px;height:1px;background:#000"></div>
<div class="t" style="left:-553.0px;width:1200px;top:611.6px;font-size:17px;line-height:19.55px;text-align:center;color:#000;font-weight:400;font-style:normal;"><span style="display:inline-block;transform:scaleX(0.95);transform-origin:50% 50%">20</span></div>
<div class="t" style="left:-262.5px;width:1200px;top:611.6px;font-size:17px;line-height:19.55px;text-align:center;color:#000;font-weight:400;font-style:normal;"><span style="display:inline-block;transform:scaleX(0.92);transform-origin:50% 50%">Programa de Controle de Uso do Álcool - PTO-ST-04</span></div>
<div class="t" style="left:90.5px;width:1200px;top:611.6px;font-size:17px;line-height:19.55px;text-align:center;color:#000;font-weight:400;font-style:normal;"><span style="display:inline-block;transform:scaleX(0.965);transform-origin:50% 50%">Interno</span></div>
<div class="t" style="left:261.5px;width:1200px;top:611.6px;font-size:17px;line-height:19.55px;text-align:center;color:#000;font-weight:400;font-style:normal;"><span style="display:inline-block;transform:scaleX(0.95);transform-origin:50% 50%">Empresa X</span></div>
<div class="t" style="left:440.5px;width:1200px;top:611.6px;font-size:17px;line-height:19.55px;text-align:center;color:#000;font-weight:400;font-style:normal;"><span style="display:inline-block;transform:scaleX(0.88);transform-origin:50% 50%">SIM</span></div>
<div class="t" style="left:627.0px;width:1200px;top:611.6px;font-size:17px;line-height:19.55px;text-align:center;color:#000;font-weight:400;font-style:normal;"><span style="display:inline-block;transform:scaleX(0.95);transform-origin:50% 50%">12</span></div>
<div class="r" style="left:17px;top:656px;width:1440px;height:1px;background:#000"></div>
<div class="t" style="left:-553.0px;width:1200px;top:635.6px;font-size:17px;line-height:19.55px;text-align:center;color:#000;font-weight:400;font-style:normal;"><span style="display:inline-block;transform:scaleX(0.95);transform-origin:50% 50%">21</span></div>
<div class="t" style="left:-262.5px;width:1200px;top:635.6px;font-size:17px;line-height:19.55px;text-align:center;color:#000;font-weight:400;font-style:normal;"><span style="display:inline-block;transform:scaleX(0.92);transform-origin:50% 50%">Observação Comportamental - PTO.ST.05</span></div>
<div class="t" style="left:90.5px;width:1200px;top:635.6px;font-size:17px;line-height:19.55px;text-align:center;color:#000;font-weight:400;font-style:normal;"><span style="display:inline-block;transform:scaleX(0.965);transform-origin:50% 50%">Interno</span></div>
<div class="t" style="left:261.5px;width:1200px;top:635.6px;font-size:17px;line-height:19.55px;text-align:center;color:#000;font-weight:400;font-style:normal;"><span style="display:inline-block;transform:scaleX(0.95);transform-origin:50% 50%">Empresa X</span></div>
<div class="t" style="left:440.5px;width:1200px;top:635.6px;font-size:17px;line-height:19.55px;text-align:center;color:#000;font-weight:400;font-style:normal;"><span style="display:inline-block;transform:scaleX(0.88);transform-origin:50% 50%">NÃO</span></div>
<div class="t" style="left:627.0px;width:1200px;top:635.6px;font-size:17px;line-height:19.55px;text-align:center;color:#000;font-weight:400;font-style:normal;"><span style="display:inline-block;transform:scaleX(0.95);transform-origin:50% 50%">12</span></div>
<div class="r" style="left:17px;top:680px;width:1440px;height:1px;background:#000"></div>
<div class="t" style="left:-553.0px;width:1200px;top:659.6px;font-size:17px;line-height:19.55px;text-align:center;color:#000;font-weight:400;font-style:normal;"><span style="display:inline-block;transform:scaleX(0.95);transform-origin:50% 50%">22</span></div>
<div class="t" style="left:-262.5px;width:1200px;top:659.6px;font-size:17px;line-height:19.55px;text-align:center;color:#000;font-weight:400;font-style:normal;"><span style="display:inline-block;transform:scaleX(0.92);transform-origin:50% 50%">Projeto Palmas Pitura para Movimentação Segura - PTO.ST.07</span></div>
<div class="t" style="left:90.5px;width:1200px;top:659.6px;font-size:17px;line-height:19.55px;text-align:center;color:#000;font-weight:400;font-style:normal;"><span style="display:inline-block;transform:scaleX(0.965);transform-origin:50% 50%">Interno</span></div>
<div class="t" style="left:261.5px;width:1200px;top:659.6px;font-size:17px;line-height:19.55px;text-align:center;color:#000;font-weight:400;font-style:normal;"><span style="display:inline-block;transform:scaleX(0.95);transform-origin:50% 50%">Empresa X</span></div>
<div class="t" style="left:440.5px;width:1200px;top:659.6px;font-size:17px;line-height:19.55px;text-align:center;color:#000;font-weight:400;font-style:normal;"><span style="display:inline-block;transform:scaleX(0.88);transform-origin:50% 50%">SIM</span></div>
<div class="t" style="left:627.0px;width:1200px;top:659.6px;font-size:17px;line-height:19.55px;text-align:center;color:#000;font-weight:400;font-style:normal;"><span style="display:inline-block;transform:scaleX(0.95);transform-origin:50% 50%">12</span></div>
<div class="r" style="left:17px;top:139px;width:1px;height:1020px;background:#000"></div>
<div class="r" style="left:76px;top:139px;width:1px;height:1020px;background:#000"></div>
<div class="r" style="left:598px;top:139px;width:1px;height:1020px;background:#000"></div>
<div class="r" style="left:782px;top:139px;width:1px;height:1020px;background:#000"></div>
<div class="r" style="left:940px;top:139px;width:1px;height:1020px;background:#000"></div>
<div class="r" style="left:1140px;top:139px;width:1px;height:1020px;background:#000"></div>
<div class="r" style="left:1313px;top:139px;width:1px;height:1020px;background:#000"></div>
<div class="r" style="left:1456px;top:139px;width:1px;height:1020px;background:#000"></div>
<div class="r" style="left:1474px;top:139px;width:1px;height:78px;background:#000"></div>
<div class="r" style="left:1590px;top:139px;width:1px;height:78px;background:#000"></div>
<div class="r" style="left:1474px;top:164px;width:117px;height:1px;background:#000"></div>
<div class="r" style="left:1474px;top:190px;width:117px;height:1px;background:#000"></div>
<div class="r" style="left:1474px;top:216px;width:117px;height:1px;background:#000"></div>
<div class="t" style="left:1479px;width:311px;top:141.7px;font-size:17.5px;line-height:20.12px;text-align:left;color:#000;font-weight:400;font-style:italic;"><span style="display:inline-block;transform:scaleX(1.03);transform-origin:0 50%">Treinamento</span></div>
<div class="t" style="left:1479px;width:311px;top:167.7px;font-size:17.5px;line-height:20.12px;text-align:left;color:#000;font-weight:400;font-style:italic;"><span style="display:inline-block;transform:scaleX(1.0);transform-origin:0 50%">Formação</span></div>
<div class="t" style="left:1479px;width:311px;top:193.7px;font-size:17.5px;line-height:20.12px;text-align:left;color:#000;font-weight:400;font-style:italic;"><span style="display:inline-block;transform:scaleX(0.97);transform-origin:0 50%">Reciclagem</span></div>
<div class="r" style="left:1473px;top:189px;width:119px;height:29px;border:2px solid #107c41"></div>
<div class="r" style="left:1588px;top:214px;width:6px;height:6px;background:#107c41"></div>
</div>
<div class="r" style="left:1898px;top:270px;width:21px;height:696px;background:#f3f3f3;border-radius:11px"></div>
<svg class="r" style="left:1902px;top:276px;" width="13" height="9" viewBox="0 0 13 9"><path d="M6.5 0.5 L12.5 8 H0.5 Z" fill="#6e6e6e"/></svg>
<div class="r" style="left:1903px;top:291px;width:11px;height:426px;background:#6e6e6e;border-radius:6px"></div>
<svg class="r" style="left:1902px;top:952px;" width="13" height="9" viewBox="0 0 13 9"><path d="M6.5 8.5 L12.5 1 H0.5 Z" fill="#6e6e6e"/></svg>
<div class="r" style="left:1896px;top:294px;width:1px;height:671px;background:#a8a8a8;"></div>
<div class="r" style="left:35px;top:964px;width:1862px;height:1px;background:#a8a8a8;"></div>
<div class="r" style="left:1px;top:965px;width:1920px;height:28px;background:#e1eae5;"></div>
<div class="r" style="left:17px;top:965px;width:87px;height:27px;background:#f3f3f3;"></div>
<svg class="r" style="left:28px;top:972px;" width="8" height="12" viewBox="0 0 8 12"><path d="M6.5 1 L1.5 6 L6.5 11 Z" fill="#b5b5b5"/></svg>
<svg class="r" style="left:57px;top:972px;" width="8" height="12" viewBox="0 0 8 12"><path d="M1.5 1 L6.5 6 L1.5 11 Z" fill="#b5b5b5"/></svg>
<div class="r" style="left:104px;top:965px;width:986px;height:27px;background:#f3f3f3;"></div>
<div class="r" style="left:104px;top:965px;width:217px;height:24px;background:#ffffff;"></div>
<div class="r" style="left:104px;top:986px;width:217px;height:3px;background:#107c41;"></div>
<div class="r" style="left:17px;top:989px;width:1073px;height:4px;background:#e9e9e9;"></div>
<div class="t" style="left:117px;top:967px;font-size:17px;line-height:17px;color:#0e6a36;font-weight:700;font-style:normal;transform:scaleX(.965);transform-origin:0 0">Cadastros Treinamentos</div>
<div class="t" style="left:336px;top:967px;font-size:17px;line-height:17px;color:#424242;font-weight:400;font-style:normal;">Cadastros Colaboradores</div>
<div class="r" style="left:544px;top:966px;width:1px;height:23px;background:#b8b8b8;"></div>
<div class="t" style="left:559px;top:967px;font-size:17px;line-height:17px;color:#424242;font-weight:400;font-style:normal;">Lançamentos Treinamentos</div>
<div class="r" style="left:786px;top:966px;width:1px;height:23px;background:#b8b8b8;"></div>
<div class="t" style="left:801px;top:967px;font-size:17px;line-height:17px;color:#424242;font-weight:400;font-style:normal;">Planejamento Treinamentos</div>
<div class="r" style="left:1031px;top:966px;width:1px;height:23px;background:#b8b8b8;"></div>
<svg class="r" style="left:1064px;top:967px;" width="22" height="22" viewBox="0 0 22 22"><circle cx="11" cy="11" r="9.5" fill="none" stroke="#5a5a5a" stroke-width="1.3"/><path d="M11 5.5 V16.5 M5.5 11 H16.5" stroke="#5a5a5a" stroke-width="1.3"/></svg>
<svg class="r" style="left:1149px;top:972px;" width="5" height="14" viewBox="0 0 5 14"><circle cx="2.5" cy="2" r="1.4" fill="#424242"/><circle cx="2.5" cy="7" r="1.4" fill="#424242"/><circle cx="2.5" cy="12" r="1.4" fill="#424242"/></svg>
<div class="r" style="left:1166px;top:967px;width:732px;height:21px;background:#f3f3f3;border-radius:11px"></div>
<svg class="r" style="left:1173px;top:972px;" width="9" height="12" viewBox="0 0 9 12"><path d="M8 1 L1 6 L8 11 Z" fill="#6e6e6e"/></svg>
<div class="r" style="left:1187px;top:972px;width:671px;height:11px;background:#6e6e6e;border-radius:6px"></div>
<svg class="r" style="left:1883px;top:972px;" width="9" height="12" viewBox="0 0 9 12"><path d="M1 1 L8 6 L1 11 Z" fill="#6e6e6e"/></svg>
<div class="r" style="left:1px;top:993px;width:1920px;height:27px;background:#f3f3f3;"></div>
<div class="t" style="left:15px;top:1001px;font-size:13px;line-height:13px;color:#242424;font-weight:400;font-style:normal;">Pronto</div>
<svg class="r" style="left:78px;top:997px;" width="20" height="20" viewBox="0 0 20 20"><path d="M2 17 V2.5 H18 V6.5" fill="none" stroke="#3a3a3a" stroke-width="1.5"/><path d="M2 5.3 H18" stroke="#3a3a3a" stroke-width="1.3"/><path d="M2 17 H7.5" stroke="#3a3a3a" stroke-width="1.5"/><path d="M4.5 8 H7 M4.5 11.3 H6 M4.5 14 H6" stroke="#3a3a3a" stroke-width="1.3"/><circle cx="13" cy="12.5" r="5.2" fill="#f3f3f3" stroke="#242424" stroke-width="1.4"/><circle cx="13" cy="12.5" r="2.2" fill="#242424"/></svg>
<svg class="r" style="left:117px;top:997px;" width="22" height="21" viewBox="0 0 22 21"><circle cx="11" cy="3.9" r="2.3" fill="none" stroke="#242424" stroke-width="1.3"/><path d="M7.5 7 C6 7, 3.5 7, 2.5 5.5 C2 4, 3.5 3, 5 4.5 C6.5 6, 9 6.5, 11 6.5 C13 6.5, 15 6, 16 5 C17.5 3.5, 19.5 4.5, 18.5 6.5 C17.8 7.5, 15.5 8, 14.5 9 V12" fill="none" stroke="#242424" stroke-width="1.3"/><path d="M7.5 7 C8.5 10, 8.2 14, 6.5 17 C6 18.5, 7.5 20, 9 19" fill="none" stroke="#242424" stroke-width="1.3"/><path d="M11 14.8 L14.2 18 L20.5 11.5" fill="none" stroke="#242424" stroke-width="1.3"/></svg>
<div class="t" style="left:140px;top:1001px;font-size:13px;line-height:13px;color:#242424;font-weight:400;font-style:normal;">Acessibilidade: tudo certo</div>
<svg class="r" style="left:1383px;top:997px;" width="20" height="18" viewBox="0 0 20 18"><rect x="1" y="1" width="16" height="11" fill="none" stroke="#424242" stroke-width="1.1"/><path d="M5 15 H8" stroke="#424242" stroke-width="1.1"/><circle cx="14" cy="13" r="3.3" fill="#fff" stroke="#424242" stroke-width="1.3"/></svg>
<div class="t" style="left:1405px;top:1001px;font-size:13px;line-height:13px;color:#242424;font-weight:400;font-style:normal;">Exibir Configurações</div>
<div class="r" style="left:1549px;top:993px;width:50px;height:27px;background:#e0e0e0;"></div>
<svg class="r" style="left:1564px;top:998px;" width="18" height="17" viewBox="0 0 18 17"><rect x="1" y="1" width="16" height="15" fill="none" stroke="#424242" stroke-width="1.2"/><path d="M1 6 H17 M1 11 H17 M6.3 1 V16 M11.6 1 V16" stroke="#424242" stroke-width="1.1"/></svg>
<svg class="r" style="left:1614px;top:998px;" width="19" height="17" viewBox="0 0 19 17"><rect x="1" y="1" width="17" height="15" fill="none" stroke="#424242" stroke-width="1.2"/><rect x="5" y="4" width="9" height="9" fill="none" stroke="#424242" stroke-width="1"/><path d="M7 6.5 H12 M7 9 H12" stroke="#424242" stroke-width="1"/></svg>
<svg class="r" style="left:1664px;top:998px;" width="19" height="17" viewBox="0 0 19 17"><rect x="1" y="1" width="17" height="15" fill="none" stroke="#424242" stroke-width="1.2"/><path d="M6 1 V9 H12 V1" fill="none" stroke="#424242" stroke-width="1.1"/></svg>
<div class="r" style="left:1706px;top:1006px;width:10px;height:1.3px;background:#424242;"></div>
<div class="r" style="left:1721px;top:1006px;width:125px;height:1px;background:#7a7a7a;"></div>
<div class="r" style="left:1781px;top:999px;width:6px;height:15px;background:#6e6e6e;"></div>
<svg class="r" style="left:1851px;top:999px;" width="13" height="13" viewBox="0 0 13 13"><path d="M6.5 0.5 V12.5 M0.5 6.5 H12.5" stroke="#424242" stroke-width="1.3"/></svg>
<div class="t" style="left:1879px;top:1001px;font-size:13px;line-height:13px;color:#424242;font-weight:400;font-style:normal;">100%</div>
</body></html>
